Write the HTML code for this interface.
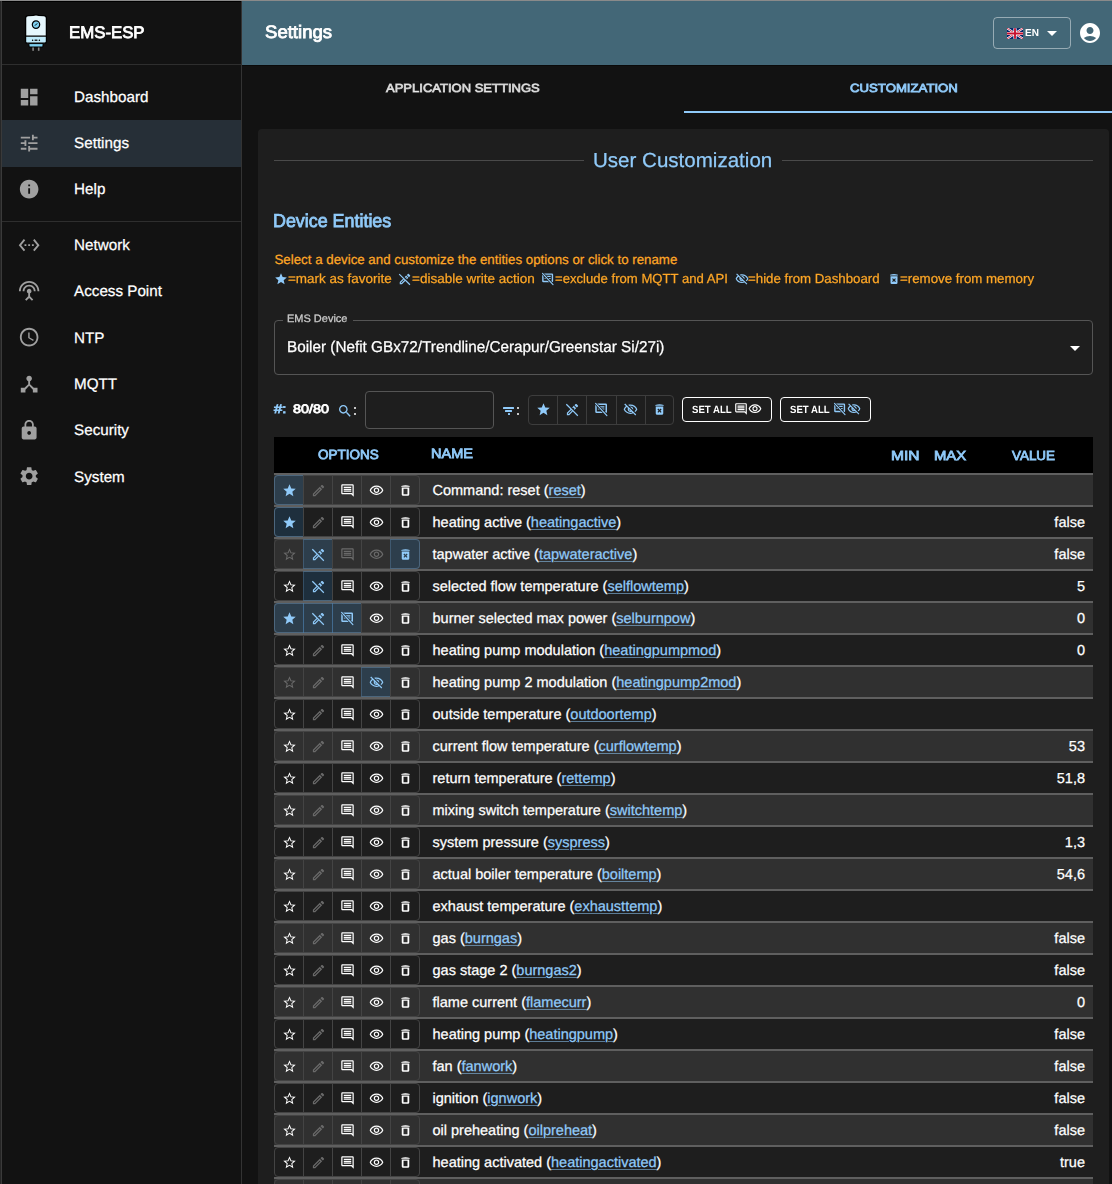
<!DOCTYPE html>
<html><head><meta charset="utf-8"><title>EMS-ESP</title>
<style>
*{box-sizing:border-box;margin:0;padding:0}
html,body{width:1112px;height:1184px;overflow:hidden;background:#121212;font-family:"Liberation Sans",sans-serif;text-rendering:geometricPrecision}
.a{position:absolute;white-space:nowrap}
</style></head><body>
<svg width="0" height="0" style="position:absolute"><defs><mask id="slashm" maskUnits="userSpaceOnUse" x="0" y="0" width="24" height="24"><rect x="0" y="0" width="24" height="24" fill="#fff"/><path d="M2.6 2.3 L20.6 21.7" stroke="#000" stroke-width="4.2"/></mask></defs></svg>
<div class="a" style="left:0px;top:0px;width:1112px;height:1184px;background:#121212;"></div>
<div class="a" style="left:0px;top:0px;width:2px;height:1184px;background:#262626;"></div>
<div class="a" style="left:1px;top:0px;width:1px;height:1184px;background:#3a3a3a;"></div>
<div class="a" style="left:241px;top:0px;width:1px;height:1184px;background:#333;"></div>
<div class="a" style="left:2px;top:64px;width:239px;height:1px;background:#2e2e2e;"></div>
<svg class="a" style="left:24px;top:14px" width="24" height="38" viewBox="0 0 24 38">
<path d="M1.6 4 Q1.6 2 4 1.7 L9 1.3 Q12 0.2 15 1.3 L20 1.7 Q22.4 2 22.4 4 L22.4 27.5 Q22.4 29.2 20.5 29.2 L3.5 29.2 Q1.6 29.2 1.6 27.5 Z" fill="#e6f7fd" stroke="#000" stroke-width="1.3"/>
<path d="M1.6 22.2 L22.4 22.2 L22.4 27.5 Q22.4 29.2 20.5 29.2 L3.5 29.2 Q1.6 29.2 1.6 27.5 Z" fill="#bfeafa" stroke="#000" stroke-width="1.2"/>
<circle cx="12" cy="10.6" r="3.7" fill="#7fd0f0" stroke="#000" stroke-width="1.2"/>
<path d="M11 11.6 L13.2 9.4" stroke="#000" stroke-width="1"/>
<circle cx="8.6" cy="26.2" r=".75" fill="#000"/><rect x="10.6" y="25.6" width="2.8" height="1.2" fill="#000"/><circle cx="15.4" cy="26.2" r=".75" fill="#000"/>
<path d="M4.8 29.6 L19.2 29.6 L18.8 33 L5.2 33 Z" fill="#7fd0f0" stroke="#000" stroke-width="1"/>
<rect x="8.3" y="33.5" width="1.6" height="3.3" fill="#888"/><rect x="13.9" y="33.5" width="1.6" height="3.3" fill="#888"/>
</svg>
<div class="a" style="left:69.16px;top:24.63px;font-size:16.744px;line-height:16.744px;color:#fff;font-weight:400;transform:scaleX(1.0031);transform-origin:0 0;-webkit-text-stroke-width:0.80px;">EMS-ESP</div>
<div class="a" style="left:2px;top:120px;width:239px;height:47px;background:#262f37;"></div>
<svg class="a" style="left:18px;top:86px;" width="22.3" height="22.3" viewBox="0 0 24 24"><path fill="#a0a0a0" d="M3 13h8V3H3v10zm0 8h8v-6H3v6zm10 0h8V11h-8v10zm0-18v6h8V3h-8z"/></svg>
<div class="a" style="left:74.1px;top:89.83px;font-size:15.2px;line-height:15.2px;color:#fff;font-weight:400;-webkit-text-stroke-width:0.25px;">Dashboard</div>
<svg class="a" style="left:18px;top:132px;" width="22.3" height="22.3" viewBox="0 0 24 24"><path fill="#a0a0a0" d="M3 17v2h6v-2H3zM3 5v2h10V5H3zm10 16v-2h8v-2h-8v-2h-2v6h2zM7 9v2H3v2h4v2h2V9H7zm14 4v-2H11v2h10zm-6-4h2V7h4V5h-4V3h-2v6z"/></svg>
<div class="a" style="left:74.1px;top:136.13px;font-size:15.2px;line-height:15.2px;color:#fff;font-weight:400;-webkit-text-stroke-width:0.25px;">Settings</div>
<svg class="a" style="left:18px;top:178px;" width="22.3" height="22.3" viewBox="0 0 24 24"><path fill="#a0a0a0" d="M12 2C6.48 2 2 6.48 2 12s4.48 10 10 10 10-4.48 10-10S17.52 2 12 2zm1 15h-2v-6h2v6zm0-8h-2V7h2v2z"/></svg>
<div class="a" style="left:74.1px;top:182.43px;font-size:15.2px;line-height:15.2px;color:#fff;font-weight:400;-webkit-text-stroke-width:0.25px;">Help</div>
<svg class="a" style="left:18px;top:234px;" width="22.3" height="22.3" viewBox="0 0 24 24"><path fill="#a0a0a0" d="M7.77 6.76 6.23 5.48.82 12l5.41 6.52 1.54-1.28L3.42 12l4.35-5.24zM7 13h2v-2H7v2zm10-2h-2v2h2v-2zm-6 2h2v-2h-2v2zm6.77-7.52-1.54 1.28L20.58 12l-4.35 5.24 1.54 1.28L23.18 12l-5.41-6.52z"/></svg>
<div class="a" style="left:74.1px;top:238.13px;font-size:15.2px;line-height:15.2px;color:#fff;font-weight:400;-webkit-text-stroke-width:0.25px;">Network</div>
<svg class="a" style="left:18px;top:280px;" width="22.3" height="22.3" viewBox="0 0 24 24"><path fill="#a0a0a0" d="M12 5c-3.87 0-7 3.13-7 7h2c0-2.76 2.24-5 5-5s5 2.24 5 5h2c0-3.87-3.13-7-7-7zm1 9.29c.88-.39 1.5-1.26 1.5-2.29 0-1.38-1.12-2.5-2.5-2.5S9.5 10.62 9.5 12c0 1.02.62 1.9 1.5 2.29v3.3L7.59 21 9 22.41l3-3 3 3L16.41 21 13 17.59v-3.3zM12 1C5.93 1 1 5.93 1 12h2c0-4.97 4.03-9 9-9s9 4.03 9 9h2c0-6.07-4.93-11-11-11z"/></svg>
<div class="a" style="left:74.1px;top:284.43px;font-size:15.2px;line-height:15.2px;color:#fff;font-weight:400;-webkit-text-stroke-width:0.25px;">Access Point</div>
<svg class="a" style="left:18px;top:326px;" width="22.3" height="22.3" viewBox="0 0 24 24"><path fill="#a0a0a0" d="M11.99 2C6.47 2 2 6.48 2 12s4.47 10 9.99 10C17.52 22 22 17.52 22 12S17.52 2 11.99 2zM12 20c-4.42 0-8-3.58-8-8s3.58-8 8-8 8 3.58 8 8-3.58 8-8 8zm.5-13H11v6l5.25 3.15.75-1.23-4.5-2.67z"/></svg>
<div class="a" style="left:74.1px;top:330.73px;font-size:15.2px;line-height:15.2px;color:#fff;font-weight:400;-webkit-text-stroke-width:0.25px;">NTP</div>
<svg class="a" style="left:18px;top:373px;" width="22.3" height="22.3" viewBox="0 0 24 24"><path fill="#a0a0a0" d="M17 16l-4-4V8.82C14.16 8.4 15 7.3 15 6c0-1.66-1.34-3-3-3S9 4.34 9 6c0 1.3.84 2.4 2 2.82V12l-4 4H3v5h5v-3.05l4-4.2 4 4.2V21h5v-5h-4z"/></svg>
<div class="a" style="left:74.1px;top:377.03px;font-size:15.2px;line-height:15.2px;color:#fff;font-weight:400;-webkit-text-stroke-width:0.25px;">MQTT</div>
<svg class="a" style="left:18px;top:419px;" width="22.3" height="22.3" viewBox="0 0 24 24"><path fill="#a0a0a0" d="M18 8h-1V6c0-2.76-2.24-5-5-5S7 3.24 7 6v2H6c-1.1 0-2 .9-2 2v10c0 1.1.9 2 2 2h12c1.1 0 2-.9 2-2V10c0-1.1-.9-2-2-2zm-6 9c-1.1 0-2-.9-2-2s.9-2 2-2 2 .9 2 2-.9 2-2 2zm3.1-9H8.9V6c0-1.71 1.39-3.1 3.1-3.1 1.71 0 3.1 1.39 3.1 3.1v2z"/></svg>
<div class="a" style="left:74.1px;top:423.33px;font-size:15.2px;line-height:15.2px;color:#fff;font-weight:400;-webkit-text-stroke-width:0.25px;">Security</div>
<svg class="a" style="left:18px;top:465px;" width="22.3" height="22.3" viewBox="0 0 24 24"><path fill="#a0a0a0" d="M19.14 12.94c.04-.3.06-.61.06-.94 0-.32-.02-.64-.07-.94l2.03-1.58c.18-.14.23-.41.12-.61l-1.92-3.32c-.12-.22-.37-.29-.59-.22l-2.39.96c-.5-.38-1.03-.7-1.62-.94l-.36-2.54c-.04-.24-.24-.41-.48-.41h-3.84c-.24 0-.43.17-.47.41l-.36 2.54c-.59.24-1.13.57-1.62.94l-2.39-.96c-.22-.08-.47 0-.59.22L2.74 8.87c-.12.21-.08.47.12.61l2.03 1.58c-.05.3-.09.63-.09.94s.02.64.07.94l-2.03 1.58c-.18.14-.23.41-.12.61l1.92 3.32c.12.22.37.29.59.22l2.39-.96c.5.38 1.03.7 1.62.94l.36 2.54c.05.24.24.41.48.41h3.84c.24 0 .44-.17.47-.41l.36-2.54c.59-.24 1.13-.56 1.62-.94l2.39.96c.22.08.47 0 .59-.22l1.92-3.32c.12-.22.07-.47-.12-.61l-2.01-1.58zM12 15.6c-1.98 0-3.6-1.62-3.6-3.6s1.62-3.6 3.6-3.6 3.6 1.62 3.6 3.6-1.62 3.6-3.6 3.6z"/></svg>
<div class="a" style="left:74.1px;top:469.63px;font-size:15.2px;line-height:15.2px;color:#fff;font-weight:400;-webkit-text-stroke-width:0.25px;">System</div>
<div class="a" style="left:2px;top:221px;width:239px;height:1px;background:#2e2e2e;"></div>
<div class="a" style="left:242px;top:0px;width:870px;height:65px;background:#436777;"></div>
<div class="a" style="left:0px;top:0px;width:1112px;height:1px;background:#8a8a8a;"></div>
<div class="a" style="left:2px;top:1px;width:239px;height:1px;background:#000;"></div>
<div class="a" style="left:242px;top:65px;width:870px;height:1px;background:#0a0a0a;"></div>
<div class="a" style="left:265.46px;top:23.32px;font-size:18.052px;line-height:18.052px;color:#fff;font-weight:400;transform:scaleX(1.0287);transform-origin:0 0;-webkit-text-stroke-width:0.80px;">Settings</div>
<div class="a" style="left:993px;top:17px;width:78px;height:32px;background:transparent;border:1px solid rgba(255,255,255,0.45);border-radius:4px;"></div>
<svg class="a" style="left:1007px;top:28px" width="16" height="11" viewBox="0 0 60 40">
<rect width="60" height="40" fill="#012169"/>
<path d="M0 0L60 40M60 0L0 40" stroke="#fff" stroke-width="8"/>
<path d="M0 0L60 40M60 0L0 40" stroke="#C8102E" stroke-width="3"/>
<path d="M30 0V40M0 20H60" stroke="#fff" stroke-width="12"/>
<path d="M30 0V40M0 20H60" stroke="#C8102E" stroke-width="7"/>
</svg>
<div class="a" style="left:1025.45px;top:29.49px;font-size:10.174px;line-height:10.174px;color:#fff;font-weight:700;transform:scaleX(0.9848);transform-origin:0 0;-webkit-text-stroke-width:0.00px;">EN</div>
<svg class="a" style="left:1040.3px;top:20.5px;" width="24" height="24" viewBox="0 0 24 24"><path fill="#fff" d="M7 10l5 5 5-5z"/></svg>
<svg class="a" style="left:1078px;top:21px;" width="24" height="24" viewBox="0 0 24 24"><path fill="#fff" d="M12 2C6.48 2 2 6.48 2 12s4.48 10 10 10 10-4.48 10-10S17.52 2 12 2zm0 4c1.93 0 3.5 1.57 3.5 3.5S13.93 13 12 13s-3.5-1.57-3.5-3.5S10.07 6 12 6zm0 14c-2.03 0-4.43-.82-6.14-2.88C7.55 15.8 9.68 15 12 15s4.45.8 6.14 2.12C16.43 19.18 14.03 20 12 20z"/></svg>
<div class="a" style="left:385.90px;top:82.86px;font-size:11.802px;line-height:11.802px;color:rgba(255,255,255,0.7);font-weight:400;transform:scaleX(1.1026);transform-origin:0 0;-webkit-text-stroke-width:0.80px;">APPLICATION SETTINGS</div>
<div class="a" style="left:850.14px;top:82.86px;font-size:11.802px;line-height:11.802px;color:#90caf9;font-weight:400;transform:scaleX(1.1171);transform-origin:0 0;-webkit-text-stroke-width:0.80px;">CUSTOMIZATION</div>
<div class="a" style="left:684px;top:111px;width:428px;height:2px;background:#90caf9;"></div>
<div class="a" style="left:258px;top:129px;width:851px;height:1100px;background:#1e1e1e;border-radius:4px;"></div>
<div class="a" style="left:274px;top:160px;width:310px;height:1px;background:#4a4a4a;"></div>
<div class="a" style="left:782px;top:160px;width:311px;height:1px;background:#4a4a4a;"></div>
<div class="a" style="left:593.46px;top:150.87px;font-size:20.349px;line-height:20.349px;color:#90caf9;font-weight:400;transform:scaleX(1.0106);transform-origin:0 0;-webkit-text-stroke-width:0.25px;">User Customization</div>
<div class="a" style="left:273.27px;top:212.10px;font-size:18.779px;line-height:18.779px;color:#90caf9;font-weight:400;transform:scaleX(0.9528);transform-origin:0 0;-webkit-text-stroke-width:0.80px;">Device Entities</div>
<div class="a" style="left:274.5px;top:252.64px;font-size:13.3px;line-height:13.3px;color:#ffa726;font-weight:400;-webkit-text-stroke-width:0.25px;">Select a device and customize the entities options or click to rename</div>
<svg class="a" style="left:274.2px;top:271.6px;" width="14" height="14" viewBox="0 0 24 24"><path fill="#90caf9" d="M12 17.27L18.18 21l-1.64-7.03L22 9.24l-7.19-.61L12 2 9.19 8.63 2 9.24l5.46 4.73L5.82 21z"/></svg>
<div class="a" style="left:287.66px;top:271.60px;font-size:13.227px;line-height:13.227px;color:#ffa726;font-weight:400;transform:scaleX(1.0187);transform-origin:0 0;-webkit-text-stroke-width:0.25px;">=mark as favorite</div>
<svg class="a" style="left:397.7px;top:271.6px;" width="14" height="14" viewBox="0 0 24 24"><path fill="#90caf9" d="M14.06 9.02l.92.92-1.11 1.11 1.41 1.41 2.52-2.52-3.75-3.75-2.52 2.52 1.41 1.41 1.12-1.1zm6.65-1.98c.39-.39.39-1.02 0-1.41l-2.34-2.34c-.2-.2-.45-.29-.7-.29s-.51.1-.7.29l-1.83 1.83 3.75 3.75 1.82-1.83zM2.81 2.81 1.39 4.22l7.32 7.32L3 17.25V21h3.75l5.71-5.71 7.32 7.32 1.41-1.41L2.81 2.81zM5.92 19H5v-.92l5.13-5.13.92.92L5.92 19z"/></svg>
<div class="a" style="left:411.76px;top:271.60px;font-size:13.227px;line-height:13.227px;color:#ffa726;font-weight:400;transform:scaleX(1.0224);transform-origin:0 0;-webkit-text-stroke-width:0.25px;">=disable write action</div>
<svg class="a" style="left:540.8px;top:271.6px;" width="14" height="14" viewBox="0 0 24 24"><g mask="url(#slashm)"><path fill="#90caf9" fill-rule="evenodd" d="M4 2.4h14.8a2 2 0 0 1 2 2v11.2a2 2 0 0 1-2 2H4a2 2 0 0 1-2-2V4.4a2 2 0 0 1 2-2z M4.4 4.8v10.4h14V4.8z"/><path fill="#90caf9" d="M6.2 6.6h10.4v2H6.2z M6.2 10.2h10.4v1.8H6.2z"/></g><path d="M2.6 2.3 L20.6 21.7" stroke="#90caf9" stroke-width="1.9" stroke-linecap="round"/></svg>
<div class="a" style="left:554.88px;top:271.60px;font-size:13.227px;line-height:13.227px;color:#ffa726;font-weight:400;transform:scaleX(0.9922);transform-origin:0 0;-webkit-text-stroke-width:0.25px;">=exclude from MQTT and API</div>
<svg class="a" style="left:734.9px;top:271.6px;" width="14" height="14" viewBox="0 0 24 24"><path fill="#90caf9" d="M12 6c3.79 0 7.17 2.13 8.82 5.5-.59 1.22-1.42 2.27-2.41 3.12l1.41 1.41c1.39-1.23 2.49-2.77 3.18-4.53C21.27 7.11 17 4 12 4c-1.27 0-2.49.2-3.64.57l1.65 1.65C10.66 6.09 11.32 6 12 6zm-1.07 1.14L13 9.21c.57.25 1.03.71 1.28 1.28l2.07 2.07c.08-.34.14-.7.14-1.07C16.5 9.01 14.48 7 12 7c-.37 0-.72.05-1.07.14zM2.01 3.87l2.68 2.68C3.06 7.83 1.77 9.53 1 11.5 2.73 15.89 7 19 12 19c1.52 0 2.98-.29 4.32-.82l3.42 3.42 1.41-1.41L3.42 2.45 2.01 3.87zm7.5 7.5 2.61 2.61c-.04.01-.08.02-.12.02-1.38 0-2.5-1.12-2.5-2.5 0-.05.01-.08.01-.13zm-3.4-3.4 1.75 1.75c-.23.55-.36 1.15-.36 1.78 0 2.48 2.02 4.5 4.5 4.5.63 0 1.23-.13 1.77-.36l.98.98c-.88.24-1.8.38-2.75.38-3.79 0-7.17-2.13-8.82-5.5.7-1.43 1.72-2.61 2.93-3.53z"/></svg>
<div class="a" style="left:747.97px;top:271.60px;font-size:13.227px;line-height:13.227px;color:#ffa726;font-weight:400;transform:scaleX(1.0039);transform-origin:0 0;-webkit-text-stroke-width:0.25px;">=hide from Dashboard</div>
<svg class="a" style="left:887.3px;top:271.6px;" width="14" height="14" viewBox="0 0 24 24"><path fill="#90caf9" fill-rule="evenodd" d="M5.3 4.6 Q12 2.6 18.7 4.6 L18.7 6.1 L5.3 6.1 Z M6 7.2h12v11.1a2.2 2.2 0 0 1-2.2 2.2H8.2A2.2 2.2 0 0 1 6 18.3Z M13.91 10.58 L15.32 11.99 L13.41 13.90 L15.32 15.81 L13.91 17.22 L12.00 15.31 L10.09 17.22 L8.68 15.81 L10.59 13.90 L8.68 11.99 L10.09 10.58 L12.00 12.49Z"/></svg>
<div class="a" style="left:900.17px;top:271.60px;font-size:13.227px;line-height:13.227px;color:#ffa726;font-weight:400;transform:scaleX(1.0055);transform-origin:0 0;-webkit-text-stroke-width:0.25px;">=remove from memory</div>
<div class="a" style="left:274px;top:320px;width:819px;height:55px;background:transparent;border:1px solid #555;border-radius:4px;"></div>
<div class="a" style="left:283px;top:316px;width:70px;height:6px;background:#1e1e1e;"></div>
<div class="a" style="left:287.32px;top:314.00px;font-size:10.756px;line-height:10.756px;color:rgba(255,255,255,0.7);font-weight:400;transform:scaleX(1.0218);transform-origin:0 0;-webkit-text-stroke-width:0.25px;">EMS Device</div>
<div class="a" style="left:287.38px;top:340.01px;font-size:15.698px;line-height:15.698px;color:#fff;font-weight:400;transform:scaleX(0.9742);transform-origin:0 0;-webkit-text-stroke-width:0.25px;">Boiler (Nefit GBx72/Trendline/Cerapur/Greenstar Si/27i)</div>
<svg class="a" style="left:1063px;top:335.5px;" width="24" height="24" viewBox="0 0 24 24"><path fill="#fff" d="M7 10l5 5 5-5z"/></svg>
<div class="a" style="left:273.96px;top:402.62px;font-size:12.384px;line-height:12.384px;color:#90caf9;font-weight:400;transform:scaleX(1.2004);transform-origin:0 0;-webkit-text-stroke-width:0.80px;">#:</div>
<div class="a" style="left:292.89px;top:402.62px;font-size:12.384px;line-height:12.384px;color:#fff;font-weight:400;transform:scaleX(1.1600);transform-origin:0 0;-webkit-text-stroke-width:0.80px;">80/80</div>
<svg class="a" style="left:337px;top:403px;" width="16" height="16" viewBox="0 0 24 24"><path fill="#90caf9" d="M15.5 14h-.79l-.28-.27C15.41 12.59 16 11.11 16 9.5 16 5.91 13.09 3 9.5 3S3 5.91 3 9.5 5.91 16 9.5 16c1.61 0 3.09-.59 4.23-1.57l.27.28v.79l5 4.99L20.49 19l-4.99-5zm-6 0C7.01 14 5 11.99 5 9.5S7.01 5 9.5 5 14 7.01 14 9.5 11.99 14 9.5 14z"/></svg>
<div class="a" style="left:353.5px;top:406.9px;width:2.4px;height:2.4px;background:#fff;border-radius:1px"></div>
<div class="a" style="left:353.5px;top:412.7px;width:2.4px;height:2.4px;background:#fff;border-radius:1px"></div>
<div class="a" style="left:365px;top:391px;width:129px;height:38px;background:transparent;border:1px solid #555;border-radius:4px;"></div>
<div class="a" style="left:503.4px;top:407px;width:10.8px;height:2px;background:#90caf9;border-radius:0.5px"></div>
<div class="a" style="left:505.2px;top:410.2px;width:7.2px;height:2px;background:#90caf9;border-radius:0.5px"></div>
<div class="a" style="left:507.6px;top:413.2px;width:2.6px;height:1.8px;background:#90caf9;border-radius:0.5px"></div>
<div class="a" style="left:517.1px;top:406.7px;width:2.4px;height:2.4px;background:#fff;border-radius:1px"></div>
<div class="a" style="left:517.1px;top:412.8px;width:2.4px;height:2.4px;background:#fff;border-radius:1px"></div>
<div class="a" style="left:528px;top:395px;width:146px;height:30px;background:transparent;border:1px solid #3d3d3d;border-radius:4px;"></div>
<svg class="a" style="left:535.5px;top:402px;" width="15" height="15" viewBox="0 0 24 24"><path fill="#90caf9" d="M12 17.27L18.18 21l-1.64-7.03L22 9.24l-7.19-.61L12 2 9.19 8.63 2 9.24l5.46 4.73L5.82 21z"/></svg>
<div class="a" style="left:557px;top:395px;width:1px;height:30px;background:#3d3d3d;"></div>
<svg class="a" style="left:564.7px;top:402px;" width="15" height="15" viewBox="0 0 24 24"><path fill="#90caf9" d="M14.06 9.02l.92.92-1.11 1.11 1.41 1.41 2.52-2.52-3.75-3.75-2.52 2.52 1.41 1.41 1.12-1.1zm6.65-1.98c.39-.39.39-1.02 0-1.41l-2.34-2.34c-.2-.2-.45-.29-.7-.29s-.51.1-.7.29l-1.83 1.83 3.75 3.75 1.82-1.83zM2.81 2.81 1.39 4.22l7.32 7.32L3 17.25V21h3.75l5.71-5.71 7.32 7.32 1.41-1.41L2.81 2.81zM5.92 19H5v-.92l5.13-5.13.92.92L5.92 19z"/></svg>
<div class="a" style="left:586px;top:395px;width:1px;height:30px;background:#3d3d3d;"></div>
<svg class="a" style="left:593.9px;top:402px;" width="15" height="15" viewBox="0 0 24 24"><g mask="url(#slashm)"><path fill="#90caf9" fill-rule="evenodd" d="M4 2.4h14.8a2 2 0 0 1 2 2v11.2a2 2 0 0 1-2 2H4a2 2 0 0 1-2-2V4.4a2 2 0 0 1 2-2z M4.4 4.8v10.4h14V4.8z"/><path fill="#90caf9" d="M6.2 6.6h10.4v2H6.2z M6.2 10.2h10.4v1.8H6.2z"/></g><path d="M2.6 2.3 L20.6 21.7" stroke="#90caf9" stroke-width="1.9" stroke-linecap="round"/></svg>
<div class="a" style="left:616px;top:395px;width:1px;height:30px;background:#3d3d3d;"></div>
<svg class="a" style="left:623.1px;top:402px;" width="15" height="15" viewBox="0 0 24 24"><path fill="#90caf9" d="M12 6c3.79 0 7.17 2.13 8.82 5.5-.59 1.22-1.42 2.27-2.41 3.12l1.41 1.41c1.39-1.23 2.49-2.77 3.18-4.53C21.27 7.11 17 4 12 4c-1.27 0-2.49.2-3.64.57l1.65 1.65C10.66 6.09 11.32 6 12 6zm-1.07 1.14L13 9.21c.57.25 1.03.71 1.28 1.28l2.07 2.07c.08-.34.14-.7.14-1.07C16.5 9.01 14.48 7 12 7c-.37 0-.72.05-1.07.14zM2.01 3.87l2.68 2.68C3.06 7.83 1.77 9.53 1 11.5 2.73 15.89 7 19 12 19c1.52 0 2.98-.29 4.32-.82l3.42 3.42 1.41-1.41L3.42 2.45 2.01 3.87zm7.5 7.5 2.61 2.61c-.04.01-.08.02-.12.02-1.38 0-2.5-1.12-2.5-2.5 0-.05.01-.08.01-.13zm-3.4-3.4 1.75 1.75c-.23.55-.36 1.15-.36 1.78 0 2.48 2.02 4.5 4.5 4.5.63 0 1.23-.13 1.77-.36l.98.98c-.88.24-1.8.38-2.75.38-3.79 0-7.17-2.13-8.82-5.5.7-1.43 1.72-2.61 2.93-3.53z"/></svg>
<div class="a" style="left:645px;top:395px;width:1px;height:30px;background:#3d3d3d;"></div>
<svg class="a" style="left:652.3px;top:402px;" width="15" height="15" viewBox="0 0 24 24"><path fill="#90caf9" fill-rule="evenodd" d="M5.3 4.6 Q12 2.6 18.7 4.6 L18.7 6.1 L5.3 6.1 Z M6 7.2h12v11.1a2.2 2.2 0 0 1-2.2 2.2H8.2A2.2 2.2 0 0 1 6 18.3Z M13.91 10.58 L15.32 11.99 L13.41 13.90 L15.32 15.81 L13.91 17.22 L12.00 15.31 L10.09 17.22 L8.68 15.81 L10.59 13.90 L8.68 11.99 L10.09 10.58 L12.00 12.49Z"/></svg>
<div class="a" style="left:682px;top:397px;width:90px;height:25px;background:transparent;border:1px solid #fff;border-radius:4px;"></div>
<div class="a" style="left:691.74px;top:406.34px;font-size:10.465px;line-height:10.465px;color:#fff;font-weight:700;transform:scaleX(0.9198);transform-origin:0 0;-webkit-text-stroke-width:0.00px;">SET ALL</div>
<svg class="a" style="left:734px;top:402px;" width="14" height="14" viewBox="0 0 24 24"><path fill="#fff" d="M21.99 4c0-1.1-.89-2-1.99-2H4c-1.1 0-2 .9-2 2v12c0 1.1.9 2 2 2h14l4 4-.01-18zM20 4v13.17L18.83 16H4V4h16zM6 12h12v2H6zm0-3h12v2H6zm0-3h12v2H6z"/></svg>
<svg class="a" style="left:748px;top:402px;" width="14" height="14" viewBox="0 0 24 24"><path fill="#fff" d="M12 6c3.79 0 7.17 2.13 8.82 5.5C19.17 14.87 15.79 17 12 17s-7.17-2.13-8.82-5.5C4.83 8.13 8.21 6 12 6m0-2C7 4 2.73 7.11 1 11.5 2.73 15.89 7 19 12 19s9.27-3.11 11-7.5C21.27 7.11 17 4 12 4zm0 5c1.38 0 2.5 1.12 2.5 2.5S13.38 14 12 14s-2.5-1.12-2.5-2.5S10.62 9 12 9m0-2c-2.48 0-4.5 2.02-4.5 4.5S9.52 16 12 16s4.5-2.02 4.5-4.5S14.48 7 12 7z"/></svg>
<div class="a" style="left:780px;top:397px;width:91px;height:25px;background:transparent;border:1px solid #fff;border-radius:4px;"></div>
<div class="a" style="left:789.94px;top:406.34px;font-size:10.465px;line-height:10.465px;color:#fff;font-weight:700;transform:scaleX(0.9198);transform-origin:0 0;-webkit-text-stroke-width:0.00px;">SET ALL</div>
<svg class="a" style="left:833px;top:402px;" width="14" height="14" viewBox="0 0 24 24"><g mask="url(#slashm)"><path fill="#90caf9" fill-rule="evenodd" d="M4 2.4h14.8a2 2 0 0 1 2 2v11.2a2 2 0 0 1-2 2H4a2 2 0 0 1-2-2V4.4a2 2 0 0 1 2-2z M4.4 4.8v10.4h14V4.8z"/><path fill="#90caf9" d="M6.2 6.6h10.4v2H6.2z M6.2 10.2h10.4v1.8H6.2z"/></g><path d="M2.6 2.3 L20.6 21.7" stroke="#90caf9" stroke-width="1.9" stroke-linecap="round"/></svg>
<svg class="a" style="left:847px;top:402px;" width="14" height="14" viewBox="0 0 24 24"><path fill="#90caf9" d="M12 6c3.79 0 7.17 2.13 8.82 5.5-.59 1.22-1.42 2.27-2.41 3.12l1.41 1.41c1.39-1.23 2.49-2.77 3.18-4.53C21.27 7.11 17 4 12 4c-1.27 0-2.49.2-3.64.57l1.65 1.65C10.66 6.09 11.32 6 12 6zm-1.07 1.14L13 9.21c.57.25 1.03.71 1.28 1.28l2.07 2.07c.08-.34.14-.7.14-1.07C16.5 9.01 14.48 7 12 7c-.37 0-.72.05-1.07.14zM2.01 3.87l2.68 2.68C3.06 7.83 1.77 9.53 1 11.5 2.73 15.89 7 19 12 19c1.52 0 2.98-.29 4.32-.82l3.42 3.42 1.41-1.41L3.42 2.45 2.01 3.87zm7.5 7.5 2.61 2.61c-.04.01-.08.02-.12.02-1.38 0-2.5-1.12-2.5-2.5 0-.05.01-.08.01-.13zm-3.4-3.4 1.75 1.75c-.23.55-.36 1.15-.36 1.78 0 2.48 2.02 4.5 4.5 4.5.63 0 1.23-.13 1.77-.36l.98.98c-.88.24-1.8.38-2.75.38-3.79 0-7.17-2.13-8.82-5.5.7-1.43 1.72-2.61 2.93-3.53z"/></svg>
<div class="a" style="left:274px;top:437px;width:819px;height:36px;background:#000;"></div>
<div class="a" style="left:318.39px;top:448.36px;font-size:13.401px;line-height:13.401px;color:#90caf9;font-weight:400;transform:scaleX(1.0085);transform-origin:0 0;-webkit-text-stroke-width:0.80px;">OPTIONS</div>
<div class="a" style="left:431.14px;top:447.23px;font-size:13.547px;line-height:13.547px;color:#90caf9;font-weight:400;transform:scaleX(1.0750);transform-origin:0 0;-webkit-text-stroke-width:0.80px;">NAME</div>
<div class="a" style="left:891.25px;top:448.58px;font-size:13.256px;line-height:13.256px;color:#90caf9;font-weight:400;transform:scaleX(1.1772);transform-origin:0 0;-webkit-text-stroke-width:0.80px;">MIN</div>
<div class="a" style="left:933.81px;top:448.58px;font-size:13.256px;line-height:13.256px;color:#90caf9;font-weight:400;transform:scaleX(1.1202);transform-origin:0 0;-webkit-text-stroke-width:0.80px;">MAX</div>
<div class="a" style="left:1011.57px;top:448.58px;font-size:13.256px;line-height:13.256px;color:#90caf9;font-weight:400;transform:scaleX(1.0122);transform-origin:0 0;-webkit-text-stroke-width:0.80px;">VALUE</div>
<div class="a" style="left:274px;top:475px;width:819px;height:30px;background:#303030;"></div>
<div class="a" style="left:274px;top:473px;width:819px;height:2px;background:#5f5f5f;"></div>
<div class="a" style="left:274px;top:505px;width:819px;height:2px;background:#5f5f5f;"></div>
<div class="a" style="left:274px;top:475px;width:146px;height:30px;background:transparent;border:1px solid #444;border-radius:4px;"></div>
<div class="a" style="left:274px;top:475px;width:30px;height:30px;background:rgba(33,150,243,0.15);border:1px solid rgba(120,170,220,0.25);border-radius:4px 0 0 4px;"></div>
<svg class="a" style="left:281.5px;top:482.5px;" width="15" height="15" viewBox="0 0 24 24"><path fill="#90caf9" d="M12 17.27L18.18 21l-1.64-7.03L22 9.24l-7.19-.61L12 2 9.19 8.63 2 9.24l5.46 4.73L5.82 21z"/></svg>
<div class="a" style="left:303px;top:475px;width:1px;height:30px;background:#444;"></div>
<svg class="a" style="left:310.5px;top:482.5px;" width="15" height="15" viewBox="0 0 24 24"><path fill="#6a6a6a" d="M14.06 9.02l.92.92L5.92 19H5v-.92l9.06-9.06M17.66 3c-.25 0-.51.1-.7.29l-1.83 1.83 3.75 3.75 1.83-1.83c.39-.39.39-1.02 0-1.41l-2.34-2.34c-.2-.2-.45-.29-.71-.29zm-3.6 3.19L3 17.25V21h3.75L17.81 9.94l-3.75-3.75z"/></svg>
<div class="a" style="left:332px;top:475px;width:1px;height:30px;background:#444;"></div>
<svg class="a" style="left:339.5px;top:482.5px;" width="15" height="15" viewBox="0 0 24 24"><path fill="#fff" d="M21.99 4c0-1.1-.89-2-1.99-2H4c-1.1 0-2 .9-2 2v12c0 1.1.9 2 2 2h14l4 4-.01-18zM20 4v13.17L18.83 16H4V4h16zM6 12h12v2H6zm0-3h12v2H6zm0-3h12v2H6z"/></svg>
<div class="a" style="left:361px;top:475px;width:1px;height:30px;background:#444;"></div>
<svg class="a" style="left:368.5px;top:482.5px;" width="15" height="15" viewBox="0 0 24 24"><path fill="#fff" d="M12 6c3.79 0 7.17 2.13 8.82 5.5C19.17 14.87 15.79 17 12 17s-7.17-2.13-8.82-5.5C4.83 8.13 8.21 6 12 6m0-2C7 4 2.73 7.11 1 11.5 2.73 15.89 7 19 12 19s9.27-3.11 11-7.5C21.27 7.11 17 4 12 4zm0 5c1.38 0 2.5 1.12 2.5 2.5S13.38 14 12 14s-2.5-1.12-2.5-2.5S10.62 9 12 9m0-2c-2.48 0-4.5 2.02-4.5 4.5S9.52 16 12 16s4.5-2.02 4.5-4.5S14.48 7 12 7z"/></svg>
<div class="a" style="left:390px;top:475px;width:1px;height:30px;background:#444;"></div>
<svg class="a" style="left:397.5px;top:482.5px;" width="15" height="15" viewBox="0 0 24 24"><path fill="#fff" fill-rule="evenodd" d="M5.3 4.6 Q12 2.6 18.7 4.6 L18.7 6.1 L5.3 6.1 Z M6 7.2h12v11.1a2.2 2.2 0 0 1-2.2 2.2H8.2A2.2 2.2 0 0 1 6 18.3Z M8.8 9.1v8.9h6.4V9.1Z"/></svg>
<div class="a" style="left:432.5px;top:483.63px;font-size:14.5px;line-height:14.5px;color:#fff;font-weight:400;-webkit-text-stroke-width:0.25px;">Command: reset (<span style="color:#90caf9;text-decoration:underline;text-decoration-color:rgba(144,202,249,0.55);text-underline-offset:1.5px;text-decoration-thickness:1px">reset</span>)</div>
<div class="a" style="left:274px;top:507px;width:819px;height:30px;background:#1e1e1e;"></div>
<div class="a" style="left:274px;top:505px;width:819px;height:2px;background:#5f5f5f;"></div>
<div class="a" style="left:274px;top:537px;width:819px;height:2px;background:#5f5f5f;"></div>
<div class="a" style="left:274px;top:507px;width:146px;height:30px;background:transparent;border:1px solid #444;border-radius:4px;"></div>
<div class="a" style="left:274px;top:507px;width:30px;height:30px;background:rgba(33,150,243,0.15);border:1px solid rgba(120,170,220,0.25);border-radius:4px 0 0 4px;"></div>
<svg class="a" style="left:281.5px;top:514.5px;" width="15" height="15" viewBox="0 0 24 24"><path fill="#90caf9" d="M12 17.27L18.18 21l-1.64-7.03L22 9.24l-7.19-.61L12 2 9.19 8.63 2 9.24l5.46 4.73L5.82 21z"/></svg>
<div class="a" style="left:303px;top:507px;width:1px;height:30px;background:#444;"></div>
<svg class="a" style="left:310.5px;top:514.5px;" width="15" height="15" viewBox="0 0 24 24"><path fill="#6a6a6a" d="M14.06 9.02l.92.92L5.92 19H5v-.92l9.06-9.06M17.66 3c-.25 0-.51.1-.7.29l-1.83 1.83 3.75 3.75 1.83-1.83c.39-.39.39-1.02 0-1.41l-2.34-2.34c-.2-.2-.45-.29-.71-.29zm-3.6 3.19L3 17.25V21h3.75L17.81 9.94l-3.75-3.75z"/></svg>
<div class="a" style="left:332px;top:507px;width:1px;height:30px;background:#444;"></div>
<svg class="a" style="left:339.5px;top:514.5px;" width="15" height="15" viewBox="0 0 24 24"><path fill="#fff" d="M21.99 4c0-1.1-.89-2-1.99-2H4c-1.1 0-2 .9-2 2v12c0 1.1.9 2 2 2h14l4 4-.01-18zM20 4v13.17L18.83 16H4V4h16zM6 12h12v2H6zm0-3h12v2H6zm0-3h12v2H6z"/></svg>
<div class="a" style="left:361px;top:507px;width:1px;height:30px;background:#444;"></div>
<svg class="a" style="left:368.5px;top:514.5px;" width="15" height="15" viewBox="0 0 24 24"><path fill="#fff" d="M12 6c3.79 0 7.17 2.13 8.82 5.5C19.17 14.87 15.79 17 12 17s-7.17-2.13-8.82-5.5C4.83 8.13 8.21 6 12 6m0-2C7 4 2.73 7.11 1 11.5 2.73 15.89 7 19 12 19s9.27-3.11 11-7.5C21.27 7.11 17 4 12 4zm0 5c1.38 0 2.5 1.12 2.5 2.5S13.38 14 12 14s-2.5-1.12-2.5-2.5S10.62 9 12 9m0-2c-2.48 0-4.5 2.02-4.5 4.5S9.52 16 12 16s4.5-2.02 4.5-4.5S14.48 7 12 7z"/></svg>
<div class="a" style="left:390px;top:507px;width:1px;height:30px;background:#444;"></div>
<svg class="a" style="left:397.5px;top:514.5px;" width="15" height="15" viewBox="0 0 24 24"><path fill="#fff" fill-rule="evenodd" d="M5.3 4.6 Q12 2.6 18.7 4.6 L18.7 6.1 L5.3 6.1 Z M6 7.2h12v11.1a2.2 2.2 0 0 1-2.2 2.2H8.2A2.2 2.2 0 0 1 6 18.3Z M8.8 9.1v8.9h6.4V9.1Z"/></svg>
<div class="a" style="left:432.5px;top:515.63px;font-size:14.5px;line-height:14.5px;color:#fff;font-weight:400;-webkit-text-stroke-width:0.25px;">heating active (<span style="color:#90caf9;text-decoration:underline;text-decoration-color:rgba(144,202,249,0.55);text-underline-offset:1.5px;text-decoration-thickness:1px">heatingactive</span>)</div>
<div class="a" style="right:27px;top:515.63px;font-size:14.5px;line-height:14.5px;color:#fff;font-weight:400;text-align:right;-webkit-text-stroke-width:0.25px;">false</div>
<div class="a" style="left:274px;top:539px;width:819px;height:30px;background:#303030;"></div>
<div class="a" style="left:274px;top:537px;width:819px;height:2px;background:#5f5f5f;"></div>
<div class="a" style="left:274px;top:569px;width:819px;height:2px;background:#5f5f5f;"></div>
<div class="a" style="left:274px;top:539px;width:146px;height:30px;background:transparent;border:1px solid #444;border-radius:4px;"></div>
<svg class="a" style="left:281.5px;top:546.5px;" width="15" height="15" viewBox="0 0 24 24"><path fill="#6a6a6a" d="M22 9.24l-7.19-.62L12 2 9.19 8.63 2 9.24l5.46 4.73L5.82 21 12 17.27 18.18 21l-1.63-7.03L22 9.24zM12 15.4l-3.76 2.27 1-4.28-3.32-2.88 4.38-.38L12 6.1l1.71 4.04 4.38.38-3.32 2.88 1 4.28L12 15.4z"/></svg>
<div class="a" style="left:303px;top:539px;width:30px;height:30px;background:rgba(33,150,243,0.15);border:1px solid rgba(120,170,220,0.25);"></div>
<svg class="a" style="left:310.5px;top:546.5px;" width="15" height="15" viewBox="0 0 24 24"><path fill="#90caf9" d="M14.06 9.02l.92.92-1.11 1.11 1.41 1.41 2.52-2.52-3.75-3.75-2.52 2.52 1.41 1.41 1.12-1.1zm6.65-1.98c.39-.39.39-1.02 0-1.41l-2.34-2.34c-.2-.2-.45-.29-.7-.29s-.51.1-.7.29l-1.83 1.83 3.75 3.75 1.82-1.83zM2.81 2.81 1.39 4.22l7.32 7.32L3 17.25V21h3.75l5.71-5.71 7.32 7.32 1.41-1.41L2.81 2.81zM5.92 19H5v-.92l5.13-5.13.92.92L5.92 19z"/></svg>
<div class="a" style="left:332px;top:539px;width:1px;height:30px;background:#444;"></div>
<svg class="a" style="left:339.5px;top:546.5px;" width="15" height="15" viewBox="0 0 24 24"><path fill="#6a6a6a" d="M21.99 4c0-1.1-.89-2-1.99-2H4c-1.1 0-2 .9-2 2v12c0 1.1.9 2 2 2h14l4 4-.01-18zM20 4v13.17L18.83 16H4V4h16zM6 12h12v2H6zm0-3h12v2H6zm0-3h12v2H6z"/></svg>
<div class="a" style="left:361px;top:539px;width:1px;height:30px;background:#444;"></div>
<svg class="a" style="left:368.5px;top:546.5px;" width="15" height="15" viewBox="0 0 24 24"><path fill="#6a6a6a" d="M12 6c3.79 0 7.17 2.13 8.82 5.5C19.17 14.87 15.79 17 12 17s-7.17-2.13-8.82-5.5C4.83 8.13 8.21 6 12 6m0-2C7 4 2.73 7.11 1 11.5 2.73 15.89 7 19 12 19s9.27-3.11 11-7.5C21.27 7.11 17 4 12 4zm0 5c1.38 0 2.5 1.12 2.5 2.5S13.38 14 12 14s-2.5-1.12-2.5-2.5S10.62 9 12 9m0-2c-2.48 0-4.5 2.02-4.5 4.5S9.52 16 12 16s4.5-2.02 4.5-4.5S14.48 7 12 7z"/></svg>
<div class="a" style="left:390px;top:539px;width:30px;height:30px;background:rgba(33,150,243,0.15);border:1px solid rgba(120,170,220,0.25);border-radius:0 4px 4px 0;"></div>
<svg class="a" style="left:397.5px;top:546.5px;" width="15" height="15" viewBox="0 0 24 24"><path fill="#90caf9" fill-rule="evenodd" d="M5.3 4.6 Q12 2.6 18.7 4.6 L18.7 6.1 L5.3 6.1 Z M6 7.2h12v11.1a2.2 2.2 0 0 1-2.2 2.2H8.2A2.2 2.2 0 0 1 6 18.3Z M13.91 10.58 L15.32 11.99 L13.41 13.90 L15.32 15.81 L13.91 17.22 L12.00 15.31 L10.09 17.22 L8.68 15.81 L10.59 13.90 L8.68 11.99 L10.09 10.58 L12.00 12.49Z"/></svg>
<div class="a" style="left:432.5px;top:547.63px;font-size:14.5px;line-height:14.5px;color:#fff;font-weight:400;-webkit-text-stroke-width:0.25px;">tapwater active (<span style="color:#90caf9;text-decoration:underline;text-decoration-color:rgba(144,202,249,0.55);text-underline-offset:1.5px;text-decoration-thickness:1px">tapwateractive</span>)</div>
<div class="a" style="right:27px;top:547.63px;font-size:14.5px;line-height:14.5px;color:#fff;font-weight:400;text-align:right;-webkit-text-stroke-width:0.25px;">false</div>
<div class="a" style="left:274px;top:571px;width:819px;height:30px;background:#1e1e1e;"></div>
<div class="a" style="left:274px;top:569px;width:819px;height:2px;background:#5f5f5f;"></div>
<div class="a" style="left:274px;top:601px;width:819px;height:2px;background:#5f5f5f;"></div>
<div class="a" style="left:274px;top:571px;width:146px;height:30px;background:transparent;border:1px solid #444;border-radius:4px;"></div>
<svg class="a" style="left:281.5px;top:578.5px;" width="15" height="15" viewBox="0 0 24 24"><path fill="#fff" d="M22 9.24l-7.19-.62L12 2 9.19 8.63 2 9.24l5.46 4.73L5.82 21 12 17.27 18.18 21l-1.63-7.03L22 9.24zM12 15.4l-3.76 2.27 1-4.28-3.32-2.88 4.38-.38L12 6.1l1.71 4.04 4.38.38-3.32 2.88 1 4.28L12 15.4z"/></svg>
<div class="a" style="left:303px;top:571px;width:30px;height:30px;background:rgba(33,150,243,0.15);border:1px solid rgba(120,170,220,0.25);"></div>
<svg class="a" style="left:310.5px;top:578.5px;" width="15" height="15" viewBox="0 0 24 24"><path fill="#90caf9" d="M14.06 9.02l.92.92-1.11 1.11 1.41 1.41 2.52-2.52-3.75-3.75-2.52 2.52 1.41 1.41 1.12-1.1zm6.65-1.98c.39-.39.39-1.02 0-1.41l-2.34-2.34c-.2-.2-.45-.29-.7-.29s-.51.1-.7.29l-1.83 1.83 3.75 3.75 1.82-1.83zM2.81 2.81 1.39 4.22l7.32 7.32L3 17.25V21h3.75l5.71-5.71 7.32 7.32 1.41-1.41L2.81 2.81zM5.92 19H5v-.92l5.13-5.13.92.92L5.92 19z"/></svg>
<div class="a" style="left:332px;top:571px;width:1px;height:30px;background:#444;"></div>
<svg class="a" style="left:339.5px;top:578.5px;" width="15" height="15" viewBox="0 0 24 24"><path fill="#fff" d="M21.99 4c0-1.1-.89-2-1.99-2H4c-1.1 0-2 .9-2 2v12c0 1.1.9 2 2 2h14l4 4-.01-18zM20 4v13.17L18.83 16H4V4h16zM6 12h12v2H6zm0-3h12v2H6zm0-3h12v2H6z"/></svg>
<div class="a" style="left:361px;top:571px;width:1px;height:30px;background:#444;"></div>
<svg class="a" style="left:368.5px;top:578.5px;" width="15" height="15" viewBox="0 0 24 24"><path fill="#fff" d="M12 6c3.79 0 7.17 2.13 8.82 5.5C19.17 14.87 15.79 17 12 17s-7.17-2.13-8.82-5.5C4.83 8.13 8.21 6 12 6m0-2C7 4 2.73 7.11 1 11.5 2.73 15.89 7 19 12 19s9.27-3.11 11-7.5C21.27 7.11 17 4 12 4zm0 5c1.38 0 2.5 1.12 2.5 2.5S13.38 14 12 14s-2.5-1.12-2.5-2.5S10.62 9 12 9m0-2c-2.48 0-4.5 2.02-4.5 4.5S9.52 16 12 16s4.5-2.02 4.5-4.5S14.48 7 12 7z"/></svg>
<div class="a" style="left:390px;top:571px;width:1px;height:30px;background:#444;"></div>
<svg class="a" style="left:397.5px;top:578.5px;" width="15" height="15" viewBox="0 0 24 24"><path fill="#fff" fill-rule="evenodd" d="M5.3 4.6 Q12 2.6 18.7 4.6 L18.7 6.1 L5.3 6.1 Z M6 7.2h12v11.1a2.2 2.2 0 0 1-2.2 2.2H8.2A2.2 2.2 0 0 1 6 18.3Z M8.8 9.1v8.9h6.4V9.1Z"/></svg>
<div class="a" style="left:432.5px;top:579.63px;font-size:14.5px;line-height:14.5px;color:#fff;font-weight:400;-webkit-text-stroke-width:0.25px;">selected flow temperature (<span style="color:#90caf9;text-decoration:underline;text-decoration-color:rgba(144,202,249,0.55);text-underline-offset:1.5px;text-decoration-thickness:1px">selflowtemp</span>)</div>
<div class="a" style="right:27px;top:579.63px;font-size:14.5px;line-height:14.5px;color:#fff;font-weight:400;text-align:right;-webkit-text-stroke-width:0.25px;">5</div>
<div class="a" style="left:274px;top:603px;width:819px;height:30px;background:#303030;"></div>
<div class="a" style="left:274px;top:601px;width:819px;height:2px;background:#5f5f5f;"></div>
<div class="a" style="left:274px;top:633px;width:819px;height:2px;background:#5f5f5f;"></div>
<div class="a" style="left:274px;top:603px;width:146px;height:30px;background:transparent;border:1px solid #444;border-radius:4px;"></div>
<div class="a" style="left:274px;top:603px;width:30px;height:30px;background:rgba(33,150,243,0.15);border:1px solid rgba(120,170,220,0.25);border-radius:4px 0 0 4px;"></div>
<svg class="a" style="left:281.5px;top:610.5px;" width="15" height="15" viewBox="0 0 24 24"><path fill="#90caf9" d="M12 17.27L18.18 21l-1.64-7.03L22 9.24l-7.19-.61L12 2 9.19 8.63 2 9.24l5.46 4.73L5.82 21z"/></svg>
<div class="a" style="left:303px;top:603px;width:30px;height:30px;background:rgba(33,150,243,0.15);border:1px solid rgba(120,170,220,0.25);border-left-color:rgba(120,170,220,0.12);"></div>
<svg class="a" style="left:310.5px;top:610.5px;" width="15" height="15" viewBox="0 0 24 24"><path fill="#90caf9" d="M14.06 9.02l.92.92-1.11 1.11 1.41 1.41 2.52-2.52-3.75-3.75-2.52 2.52 1.41 1.41 1.12-1.1zm6.65-1.98c.39-.39.39-1.02 0-1.41l-2.34-2.34c-.2-.2-.45-.29-.7-.29s-.51.1-.7.29l-1.83 1.83 3.75 3.75 1.82-1.83zM2.81 2.81 1.39 4.22l7.32 7.32L3 17.25V21h3.75l5.71-5.71 7.32 7.32 1.41-1.41L2.81 2.81zM5.92 19H5v-.92l5.13-5.13.92.92L5.92 19z"/></svg>
<div class="a" style="left:332px;top:603px;width:30px;height:30px;background:rgba(33,150,243,0.15);border:1px solid rgba(120,170,220,0.25);border-left-color:rgba(120,170,220,0.12);"></div>
<svg class="a" style="left:339.5px;top:610.5px;" width="15" height="15" viewBox="0 0 24 24"><g mask="url(#slashm)"><path fill="#90caf9" fill-rule="evenodd" d="M4 2.4h14.8a2 2 0 0 1 2 2v11.2a2 2 0 0 1-2 2H4a2 2 0 0 1-2-2V4.4a2 2 0 0 1 2-2z M4.4 4.8v10.4h14V4.8z"/><path fill="#90caf9" d="M6.2 6.6h10.4v2H6.2z M6.2 10.2h10.4v1.8H6.2z"/></g><path d="M2.6 2.3 L20.6 21.7" stroke="#90caf9" stroke-width="1.9" stroke-linecap="round"/></svg>
<div class="a" style="left:361px;top:603px;width:1px;height:30px;background:#444;"></div>
<svg class="a" style="left:368.5px;top:610.5px;" width="15" height="15" viewBox="0 0 24 24"><path fill="#fff" d="M12 6c3.79 0 7.17 2.13 8.82 5.5C19.17 14.87 15.79 17 12 17s-7.17-2.13-8.82-5.5C4.83 8.13 8.21 6 12 6m0-2C7 4 2.73 7.11 1 11.5 2.73 15.89 7 19 12 19s9.27-3.11 11-7.5C21.27 7.11 17 4 12 4zm0 5c1.38 0 2.5 1.12 2.5 2.5S13.38 14 12 14s-2.5-1.12-2.5-2.5S10.62 9 12 9m0-2c-2.48 0-4.5 2.02-4.5 4.5S9.52 16 12 16s4.5-2.02 4.5-4.5S14.48 7 12 7z"/></svg>
<div class="a" style="left:390px;top:603px;width:1px;height:30px;background:#444;"></div>
<svg class="a" style="left:397.5px;top:610.5px;" width="15" height="15" viewBox="0 0 24 24"><path fill="#fff" fill-rule="evenodd" d="M5.3 4.6 Q12 2.6 18.7 4.6 L18.7 6.1 L5.3 6.1 Z M6 7.2h12v11.1a2.2 2.2 0 0 1-2.2 2.2H8.2A2.2 2.2 0 0 1 6 18.3Z M8.8 9.1v8.9h6.4V9.1Z"/></svg>
<div class="a" style="left:432.5px;top:611.63px;font-size:14.5px;line-height:14.5px;color:#fff;font-weight:400;-webkit-text-stroke-width:0.25px;">burner selected max power (<span style="color:#90caf9;text-decoration:underline;text-decoration-color:rgba(144,202,249,0.55);text-underline-offset:1.5px;text-decoration-thickness:1px">selburnpow</span>)</div>
<div class="a" style="right:27px;top:611.63px;font-size:14.5px;line-height:14.5px;color:#fff;font-weight:400;text-align:right;-webkit-text-stroke-width:0.25px;">0</div>
<div class="a" style="left:274px;top:635px;width:819px;height:30px;background:#1e1e1e;"></div>
<div class="a" style="left:274px;top:633px;width:819px;height:2px;background:#5f5f5f;"></div>
<div class="a" style="left:274px;top:665px;width:819px;height:2px;background:#5f5f5f;"></div>
<div class="a" style="left:274px;top:635px;width:146px;height:30px;background:transparent;border:1px solid #444;border-radius:4px;"></div>
<svg class="a" style="left:281.5px;top:642.5px;" width="15" height="15" viewBox="0 0 24 24"><path fill="#fff" d="M22 9.24l-7.19-.62L12 2 9.19 8.63 2 9.24l5.46 4.73L5.82 21 12 17.27 18.18 21l-1.63-7.03L22 9.24zM12 15.4l-3.76 2.27 1-4.28-3.32-2.88 4.38-.38L12 6.1l1.71 4.04 4.38.38-3.32 2.88 1 4.28L12 15.4z"/></svg>
<div class="a" style="left:303px;top:635px;width:1px;height:30px;background:#444;"></div>
<svg class="a" style="left:310.5px;top:642.5px;" width="15" height="15" viewBox="0 0 24 24"><path fill="#6a6a6a" d="M14.06 9.02l.92.92L5.92 19H5v-.92l9.06-9.06M17.66 3c-.25 0-.51.1-.7.29l-1.83 1.83 3.75 3.75 1.83-1.83c.39-.39.39-1.02 0-1.41l-2.34-2.34c-.2-.2-.45-.29-.71-.29zm-3.6 3.19L3 17.25V21h3.75L17.81 9.94l-3.75-3.75z"/></svg>
<div class="a" style="left:332px;top:635px;width:1px;height:30px;background:#444;"></div>
<svg class="a" style="left:339.5px;top:642.5px;" width="15" height="15" viewBox="0 0 24 24"><path fill="#fff" d="M21.99 4c0-1.1-.89-2-1.99-2H4c-1.1 0-2 .9-2 2v12c0 1.1.9 2 2 2h14l4 4-.01-18zM20 4v13.17L18.83 16H4V4h16zM6 12h12v2H6zm0-3h12v2H6zm0-3h12v2H6z"/></svg>
<div class="a" style="left:361px;top:635px;width:1px;height:30px;background:#444;"></div>
<svg class="a" style="left:368.5px;top:642.5px;" width="15" height="15" viewBox="0 0 24 24"><path fill="#fff" d="M12 6c3.79 0 7.17 2.13 8.82 5.5C19.17 14.87 15.79 17 12 17s-7.17-2.13-8.82-5.5C4.83 8.13 8.21 6 12 6m0-2C7 4 2.73 7.11 1 11.5 2.73 15.89 7 19 12 19s9.27-3.11 11-7.5C21.27 7.11 17 4 12 4zm0 5c1.38 0 2.5 1.12 2.5 2.5S13.38 14 12 14s-2.5-1.12-2.5-2.5S10.62 9 12 9m0-2c-2.48 0-4.5 2.02-4.5 4.5S9.52 16 12 16s4.5-2.02 4.5-4.5S14.48 7 12 7z"/></svg>
<div class="a" style="left:390px;top:635px;width:1px;height:30px;background:#444;"></div>
<svg class="a" style="left:397.5px;top:642.5px;" width="15" height="15" viewBox="0 0 24 24"><path fill="#fff" fill-rule="evenodd" d="M5.3 4.6 Q12 2.6 18.7 4.6 L18.7 6.1 L5.3 6.1 Z M6 7.2h12v11.1a2.2 2.2 0 0 1-2.2 2.2H8.2A2.2 2.2 0 0 1 6 18.3Z M8.8 9.1v8.9h6.4V9.1Z"/></svg>
<div class="a" style="left:432.5px;top:643.63px;font-size:14.5px;line-height:14.5px;color:#fff;font-weight:400;-webkit-text-stroke-width:0.25px;">heating pump modulation (<span style="color:#90caf9;text-decoration:underline;text-decoration-color:rgba(144,202,249,0.55);text-underline-offset:1.5px;text-decoration-thickness:1px">heatingpumpmod</span>)</div>
<div class="a" style="right:27px;top:643.63px;font-size:14.5px;line-height:14.5px;color:#fff;font-weight:400;text-align:right;-webkit-text-stroke-width:0.25px;">0</div>
<div class="a" style="left:274px;top:667px;width:819px;height:30px;background:#303030;"></div>
<div class="a" style="left:274px;top:665px;width:819px;height:2px;background:#5f5f5f;"></div>
<div class="a" style="left:274px;top:697px;width:819px;height:2px;background:#5f5f5f;"></div>
<div class="a" style="left:274px;top:667px;width:146px;height:30px;background:transparent;border:1px solid #444;border-radius:4px;"></div>
<svg class="a" style="left:281.5px;top:674.5px;" width="15" height="15" viewBox="0 0 24 24"><path fill="#6a6a6a" d="M22 9.24l-7.19-.62L12 2 9.19 8.63 2 9.24l5.46 4.73L5.82 21 12 17.27 18.18 21l-1.63-7.03L22 9.24zM12 15.4l-3.76 2.27 1-4.28-3.32-2.88 4.38-.38L12 6.1l1.71 4.04 4.38.38-3.32 2.88 1 4.28L12 15.4z"/></svg>
<div class="a" style="left:303px;top:667px;width:1px;height:30px;background:#444;"></div>
<svg class="a" style="left:310.5px;top:674.5px;" width="15" height="15" viewBox="0 0 24 24"><path fill="#6a6a6a" d="M14.06 9.02l.92.92L5.92 19H5v-.92l9.06-9.06M17.66 3c-.25 0-.51.1-.7.29l-1.83 1.83 3.75 3.75 1.83-1.83c.39-.39.39-1.02 0-1.41l-2.34-2.34c-.2-.2-.45-.29-.71-.29zm-3.6 3.19L3 17.25V21h3.75L17.81 9.94l-3.75-3.75z"/></svg>
<div class="a" style="left:332px;top:667px;width:1px;height:30px;background:#444;"></div>
<svg class="a" style="left:339.5px;top:674.5px;" width="15" height="15" viewBox="0 0 24 24"><path fill="#fff" d="M21.99 4c0-1.1-.89-2-1.99-2H4c-1.1 0-2 .9-2 2v12c0 1.1.9 2 2 2h14l4 4-.01-18zM20 4v13.17L18.83 16H4V4h16zM6 12h12v2H6zm0-3h12v2H6zm0-3h12v2H6z"/></svg>
<div class="a" style="left:361px;top:667px;width:30px;height:30px;background:rgba(33,150,243,0.15);border:1px solid rgba(120,170,220,0.25);"></div>
<svg class="a" style="left:368.5px;top:674.5px;" width="15" height="15" viewBox="0 0 24 24"><path fill="#90caf9" d="M12 6c3.79 0 7.17 2.13 8.82 5.5-.59 1.22-1.42 2.27-2.41 3.12l1.41 1.41c1.39-1.23 2.49-2.77 3.18-4.53C21.27 7.11 17 4 12 4c-1.27 0-2.49.2-3.64.57l1.65 1.65C10.66 6.09 11.32 6 12 6zm-1.07 1.14L13 9.21c.57.25 1.03.71 1.28 1.28l2.07 2.07c.08-.34.14-.7.14-1.07C16.5 9.01 14.48 7 12 7c-.37 0-.72.05-1.07.14zM2.01 3.87l2.68 2.68C3.06 7.83 1.77 9.53 1 11.5 2.73 15.89 7 19 12 19c1.52 0 2.98-.29 4.32-.82l3.42 3.42 1.41-1.41L3.42 2.45 2.01 3.87zm7.5 7.5 2.61 2.61c-.04.01-.08.02-.12.02-1.38 0-2.5-1.12-2.5-2.5 0-.05.01-.08.01-.13zm-3.4-3.4 1.75 1.75c-.23.55-.36 1.15-.36 1.78 0 2.48 2.02 4.5 4.5 4.5.63 0 1.23-.13 1.77-.36l.98.98c-.88.24-1.8.38-2.75.38-3.79 0-7.17-2.13-8.82-5.5.7-1.43 1.72-2.61 2.93-3.53z"/></svg>
<div class="a" style="left:390px;top:667px;width:1px;height:30px;background:#444;"></div>
<svg class="a" style="left:397.5px;top:674.5px;" width="15" height="15" viewBox="0 0 24 24"><path fill="#fff" fill-rule="evenodd" d="M5.3 4.6 Q12 2.6 18.7 4.6 L18.7 6.1 L5.3 6.1 Z M6 7.2h12v11.1a2.2 2.2 0 0 1-2.2 2.2H8.2A2.2 2.2 0 0 1 6 18.3Z M8.8 9.1v8.9h6.4V9.1Z"/></svg>
<div class="a" style="left:432.5px;top:675.63px;font-size:14.5px;line-height:14.5px;color:#fff;font-weight:400;-webkit-text-stroke-width:0.25px;">heating pump 2 modulation (<span style="color:#90caf9;text-decoration:underline;text-decoration-color:rgba(144,202,249,0.55);text-underline-offset:1.5px;text-decoration-thickness:1px">heatingpump2mod</span>)</div>
<div class="a" style="left:274px;top:699px;width:819px;height:30px;background:#1e1e1e;"></div>
<div class="a" style="left:274px;top:697px;width:819px;height:2px;background:#5f5f5f;"></div>
<div class="a" style="left:274px;top:729px;width:819px;height:2px;background:#5f5f5f;"></div>
<div class="a" style="left:274px;top:699px;width:146px;height:30px;background:transparent;border:1px solid #444;border-radius:4px;"></div>
<svg class="a" style="left:281.5px;top:706.5px;" width="15" height="15" viewBox="0 0 24 24"><path fill="#fff" d="M22 9.24l-7.19-.62L12 2 9.19 8.63 2 9.24l5.46 4.73L5.82 21 12 17.27 18.18 21l-1.63-7.03L22 9.24zM12 15.4l-3.76 2.27 1-4.28-3.32-2.88 4.38-.38L12 6.1l1.71 4.04 4.38.38-3.32 2.88 1 4.28L12 15.4z"/></svg>
<div class="a" style="left:303px;top:699px;width:1px;height:30px;background:#444;"></div>
<svg class="a" style="left:310.5px;top:706.5px;" width="15" height="15" viewBox="0 0 24 24"><path fill="#6a6a6a" d="M14.06 9.02l.92.92L5.92 19H5v-.92l9.06-9.06M17.66 3c-.25 0-.51.1-.7.29l-1.83 1.83 3.75 3.75 1.83-1.83c.39-.39.39-1.02 0-1.41l-2.34-2.34c-.2-.2-.45-.29-.71-.29zm-3.6 3.19L3 17.25V21h3.75L17.81 9.94l-3.75-3.75z"/></svg>
<div class="a" style="left:332px;top:699px;width:1px;height:30px;background:#444;"></div>
<svg class="a" style="left:339.5px;top:706.5px;" width="15" height="15" viewBox="0 0 24 24"><path fill="#fff" d="M21.99 4c0-1.1-.89-2-1.99-2H4c-1.1 0-2 .9-2 2v12c0 1.1.9 2 2 2h14l4 4-.01-18zM20 4v13.17L18.83 16H4V4h16zM6 12h12v2H6zm0-3h12v2H6zm0-3h12v2H6z"/></svg>
<div class="a" style="left:361px;top:699px;width:1px;height:30px;background:#444;"></div>
<svg class="a" style="left:368.5px;top:706.5px;" width="15" height="15" viewBox="0 0 24 24"><path fill="#fff" d="M12 6c3.79 0 7.17 2.13 8.82 5.5C19.17 14.87 15.79 17 12 17s-7.17-2.13-8.82-5.5C4.83 8.13 8.21 6 12 6m0-2C7 4 2.73 7.11 1 11.5 2.73 15.89 7 19 12 19s9.27-3.11 11-7.5C21.27 7.11 17 4 12 4zm0 5c1.38 0 2.5 1.12 2.5 2.5S13.38 14 12 14s-2.5-1.12-2.5-2.5S10.62 9 12 9m0-2c-2.48 0-4.5 2.02-4.5 4.5S9.52 16 12 16s4.5-2.02 4.5-4.5S14.48 7 12 7z"/></svg>
<div class="a" style="left:390px;top:699px;width:1px;height:30px;background:#444;"></div>
<svg class="a" style="left:397.5px;top:706.5px;" width="15" height="15" viewBox="0 0 24 24"><path fill="#fff" fill-rule="evenodd" d="M5.3 4.6 Q12 2.6 18.7 4.6 L18.7 6.1 L5.3 6.1 Z M6 7.2h12v11.1a2.2 2.2 0 0 1-2.2 2.2H8.2A2.2 2.2 0 0 1 6 18.3Z M8.8 9.1v8.9h6.4V9.1Z"/></svg>
<div class="a" style="left:432.5px;top:707.63px;font-size:14.5px;line-height:14.5px;color:#fff;font-weight:400;-webkit-text-stroke-width:0.25px;">outside temperature (<span style="color:#90caf9;text-decoration:underline;text-decoration-color:rgba(144,202,249,0.55);text-underline-offset:1.5px;text-decoration-thickness:1px">outdoortemp</span>)</div>
<div class="a" style="left:274px;top:731px;width:819px;height:30px;background:#303030;"></div>
<div class="a" style="left:274px;top:729px;width:819px;height:2px;background:#5f5f5f;"></div>
<div class="a" style="left:274px;top:761px;width:819px;height:2px;background:#5f5f5f;"></div>
<div class="a" style="left:274px;top:731px;width:146px;height:30px;background:transparent;border:1px solid #444;border-radius:4px;"></div>
<svg class="a" style="left:281.5px;top:738.5px;" width="15" height="15" viewBox="0 0 24 24"><path fill="#fff" d="M22 9.24l-7.19-.62L12 2 9.19 8.63 2 9.24l5.46 4.73L5.82 21 12 17.27 18.18 21l-1.63-7.03L22 9.24zM12 15.4l-3.76 2.27 1-4.28-3.32-2.88 4.38-.38L12 6.1l1.71 4.04 4.38.38-3.32 2.88 1 4.28L12 15.4z"/></svg>
<div class="a" style="left:303px;top:731px;width:1px;height:30px;background:#444;"></div>
<svg class="a" style="left:310.5px;top:738.5px;" width="15" height="15" viewBox="0 0 24 24"><path fill="#6a6a6a" d="M14.06 9.02l.92.92L5.92 19H5v-.92l9.06-9.06M17.66 3c-.25 0-.51.1-.7.29l-1.83 1.83 3.75 3.75 1.83-1.83c.39-.39.39-1.02 0-1.41l-2.34-2.34c-.2-.2-.45-.29-.71-.29zm-3.6 3.19L3 17.25V21h3.75L17.81 9.94l-3.75-3.75z"/></svg>
<div class="a" style="left:332px;top:731px;width:1px;height:30px;background:#444;"></div>
<svg class="a" style="left:339.5px;top:738.5px;" width="15" height="15" viewBox="0 0 24 24"><path fill="#fff" d="M21.99 4c0-1.1-.89-2-1.99-2H4c-1.1 0-2 .9-2 2v12c0 1.1.9 2 2 2h14l4 4-.01-18zM20 4v13.17L18.83 16H4V4h16zM6 12h12v2H6zm0-3h12v2H6zm0-3h12v2H6z"/></svg>
<div class="a" style="left:361px;top:731px;width:1px;height:30px;background:#444;"></div>
<svg class="a" style="left:368.5px;top:738.5px;" width="15" height="15" viewBox="0 0 24 24"><path fill="#fff" d="M12 6c3.79 0 7.17 2.13 8.82 5.5C19.17 14.87 15.79 17 12 17s-7.17-2.13-8.82-5.5C4.83 8.13 8.21 6 12 6m0-2C7 4 2.73 7.11 1 11.5 2.73 15.89 7 19 12 19s9.27-3.11 11-7.5C21.27 7.11 17 4 12 4zm0 5c1.38 0 2.5 1.12 2.5 2.5S13.38 14 12 14s-2.5-1.12-2.5-2.5S10.62 9 12 9m0-2c-2.48 0-4.5 2.02-4.5 4.5S9.52 16 12 16s4.5-2.02 4.5-4.5S14.48 7 12 7z"/></svg>
<div class="a" style="left:390px;top:731px;width:1px;height:30px;background:#444;"></div>
<svg class="a" style="left:397.5px;top:738.5px;" width="15" height="15" viewBox="0 0 24 24"><path fill="#fff" fill-rule="evenodd" d="M5.3 4.6 Q12 2.6 18.7 4.6 L18.7 6.1 L5.3 6.1 Z M6 7.2h12v11.1a2.2 2.2 0 0 1-2.2 2.2H8.2A2.2 2.2 0 0 1 6 18.3Z M8.8 9.1v8.9h6.4V9.1Z"/></svg>
<div class="a" style="left:432.5px;top:739.63px;font-size:14.5px;line-height:14.5px;color:#fff;font-weight:400;-webkit-text-stroke-width:0.25px;">current flow temperature (<span style="color:#90caf9;text-decoration:underline;text-decoration-color:rgba(144,202,249,0.55);text-underline-offset:1.5px;text-decoration-thickness:1px">curflowtemp</span>)</div>
<div class="a" style="right:27px;top:739.63px;font-size:14.5px;line-height:14.5px;color:#fff;font-weight:400;text-align:right;-webkit-text-stroke-width:0.25px;">53</div>
<div class="a" style="left:274px;top:763px;width:819px;height:30px;background:#1e1e1e;"></div>
<div class="a" style="left:274px;top:761px;width:819px;height:2px;background:#5f5f5f;"></div>
<div class="a" style="left:274px;top:793px;width:819px;height:2px;background:#5f5f5f;"></div>
<div class="a" style="left:274px;top:763px;width:146px;height:30px;background:transparent;border:1px solid #444;border-radius:4px;"></div>
<svg class="a" style="left:281.5px;top:770.5px;" width="15" height="15" viewBox="0 0 24 24"><path fill="#fff" d="M22 9.24l-7.19-.62L12 2 9.19 8.63 2 9.24l5.46 4.73L5.82 21 12 17.27 18.18 21l-1.63-7.03L22 9.24zM12 15.4l-3.76 2.27 1-4.28-3.32-2.88 4.38-.38L12 6.1l1.71 4.04 4.38.38-3.32 2.88 1 4.28L12 15.4z"/></svg>
<div class="a" style="left:303px;top:763px;width:1px;height:30px;background:#444;"></div>
<svg class="a" style="left:310.5px;top:770.5px;" width="15" height="15" viewBox="0 0 24 24"><path fill="#6a6a6a" d="M14.06 9.02l.92.92L5.92 19H5v-.92l9.06-9.06M17.66 3c-.25 0-.51.1-.7.29l-1.83 1.83 3.75 3.75 1.83-1.83c.39-.39.39-1.02 0-1.41l-2.34-2.34c-.2-.2-.45-.29-.71-.29zm-3.6 3.19L3 17.25V21h3.75L17.81 9.94l-3.75-3.75z"/></svg>
<div class="a" style="left:332px;top:763px;width:1px;height:30px;background:#444;"></div>
<svg class="a" style="left:339.5px;top:770.5px;" width="15" height="15" viewBox="0 0 24 24"><path fill="#fff" d="M21.99 4c0-1.1-.89-2-1.99-2H4c-1.1 0-2 .9-2 2v12c0 1.1.9 2 2 2h14l4 4-.01-18zM20 4v13.17L18.83 16H4V4h16zM6 12h12v2H6zm0-3h12v2H6zm0-3h12v2H6z"/></svg>
<div class="a" style="left:361px;top:763px;width:1px;height:30px;background:#444;"></div>
<svg class="a" style="left:368.5px;top:770.5px;" width="15" height="15" viewBox="0 0 24 24"><path fill="#fff" d="M12 6c3.79 0 7.17 2.13 8.82 5.5C19.17 14.87 15.79 17 12 17s-7.17-2.13-8.82-5.5C4.83 8.13 8.21 6 12 6m0-2C7 4 2.73 7.11 1 11.5 2.73 15.89 7 19 12 19s9.27-3.11 11-7.5C21.27 7.11 17 4 12 4zm0 5c1.38 0 2.5 1.12 2.5 2.5S13.38 14 12 14s-2.5-1.12-2.5-2.5S10.62 9 12 9m0-2c-2.48 0-4.5 2.02-4.5 4.5S9.52 16 12 16s4.5-2.02 4.5-4.5S14.48 7 12 7z"/></svg>
<div class="a" style="left:390px;top:763px;width:1px;height:30px;background:#444;"></div>
<svg class="a" style="left:397.5px;top:770.5px;" width="15" height="15" viewBox="0 0 24 24"><path fill="#fff" fill-rule="evenodd" d="M5.3 4.6 Q12 2.6 18.7 4.6 L18.7 6.1 L5.3 6.1 Z M6 7.2h12v11.1a2.2 2.2 0 0 1-2.2 2.2H8.2A2.2 2.2 0 0 1 6 18.3Z M8.8 9.1v8.9h6.4V9.1Z"/></svg>
<div class="a" style="left:432.5px;top:771.63px;font-size:14.5px;line-height:14.5px;color:#fff;font-weight:400;-webkit-text-stroke-width:0.25px;">return temperature (<span style="color:#90caf9;text-decoration:underline;text-decoration-color:rgba(144,202,249,0.55);text-underline-offset:1.5px;text-decoration-thickness:1px">rettemp</span>)</div>
<div class="a" style="right:27px;top:771.63px;font-size:14.5px;line-height:14.5px;color:#fff;font-weight:400;text-align:right;-webkit-text-stroke-width:0.25px;">51,8</div>
<div class="a" style="left:274px;top:795px;width:819px;height:30px;background:#303030;"></div>
<div class="a" style="left:274px;top:793px;width:819px;height:2px;background:#5f5f5f;"></div>
<div class="a" style="left:274px;top:825px;width:819px;height:2px;background:#5f5f5f;"></div>
<div class="a" style="left:274px;top:795px;width:146px;height:30px;background:transparent;border:1px solid #444;border-radius:4px;"></div>
<svg class="a" style="left:281.5px;top:802.5px;" width="15" height="15" viewBox="0 0 24 24"><path fill="#fff" d="M22 9.24l-7.19-.62L12 2 9.19 8.63 2 9.24l5.46 4.73L5.82 21 12 17.27 18.18 21l-1.63-7.03L22 9.24zM12 15.4l-3.76 2.27 1-4.28-3.32-2.88 4.38-.38L12 6.1l1.71 4.04 4.38.38-3.32 2.88 1 4.28L12 15.4z"/></svg>
<div class="a" style="left:303px;top:795px;width:1px;height:30px;background:#444;"></div>
<svg class="a" style="left:310.5px;top:802.5px;" width="15" height="15" viewBox="0 0 24 24"><path fill="#6a6a6a" d="M14.06 9.02l.92.92L5.92 19H5v-.92l9.06-9.06M17.66 3c-.25 0-.51.1-.7.29l-1.83 1.83 3.75 3.75 1.83-1.83c.39-.39.39-1.02 0-1.41l-2.34-2.34c-.2-.2-.45-.29-.71-.29zm-3.6 3.19L3 17.25V21h3.75L17.81 9.94l-3.75-3.75z"/></svg>
<div class="a" style="left:332px;top:795px;width:1px;height:30px;background:#444;"></div>
<svg class="a" style="left:339.5px;top:802.5px;" width="15" height="15" viewBox="0 0 24 24"><path fill="#fff" d="M21.99 4c0-1.1-.89-2-1.99-2H4c-1.1 0-2 .9-2 2v12c0 1.1.9 2 2 2h14l4 4-.01-18zM20 4v13.17L18.83 16H4V4h16zM6 12h12v2H6zm0-3h12v2H6zm0-3h12v2H6z"/></svg>
<div class="a" style="left:361px;top:795px;width:1px;height:30px;background:#444;"></div>
<svg class="a" style="left:368.5px;top:802.5px;" width="15" height="15" viewBox="0 0 24 24"><path fill="#fff" d="M12 6c3.79 0 7.17 2.13 8.82 5.5C19.17 14.87 15.79 17 12 17s-7.17-2.13-8.82-5.5C4.83 8.13 8.21 6 12 6m0-2C7 4 2.73 7.11 1 11.5 2.73 15.89 7 19 12 19s9.27-3.11 11-7.5C21.27 7.11 17 4 12 4zm0 5c1.38 0 2.5 1.12 2.5 2.5S13.38 14 12 14s-2.5-1.12-2.5-2.5S10.62 9 12 9m0-2c-2.48 0-4.5 2.02-4.5 4.5S9.52 16 12 16s4.5-2.02 4.5-4.5S14.48 7 12 7z"/></svg>
<div class="a" style="left:390px;top:795px;width:1px;height:30px;background:#444;"></div>
<svg class="a" style="left:397.5px;top:802.5px;" width="15" height="15" viewBox="0 0 24 24"><path fill="#fff" fill-rule="evenodd" d="M5.3 4.6 Q12 2.6 18.7 4.6 L18.7 6.1 L5.3 6.1 Z M6 7.2h12v11.1a2.2 2.2 0 0 1-2.2 2.2H8.2A2.2 2.2 0 0 1 6 18.3Z M8.8 9.1v8.9h6.4V9.1Z"/></svg>
<div class="a" style="left:432.5px;top:803.63px;font-size:14.5px;line-height:14.5px;color:#fff;font-weight:400;-webkit-text-stroke-width:0.25px;">mixing switch temperature (<span style="color:#90caf9;text-decoration:underline;text-decoration-color:rgba(144,202,249,0.55);text-underline-offset:1.5px;text-decoration-thickness:1px">switchtemp</span>)</div>
<div class="a" style="left:274px;top:827px;width:819px;height:30px;background:#1e1e1e;"></div>
<div class="a" style="left:274px;top:825px;width:819px;height:2px;background:#5f5f5f;"></div>
<div class="a" style="left:274px;top:857px;width:819px;height:2px;background:#5f5f5f;"></div>
<div class="a" style="left:274px;top:827px;width:146px;height:30px;background:transparent;border:1px solid #444;border-radius:4px;"></div>
<svg class="a" style="left:281.5px;top:834.5px;" width="15" height="15" viewBox="0 0 24 24"><path fill="#fff" d="M22 9.24l-7.19-.62L12 2 9.19 8.63 2 9.24l5.46 4.73L5.82 21 12 17.27 18.18 21l-1.63-7.03L22 9.24zM12 15.4l-3.76 2.27 1-4.28-3.32-2.88 4.38-.38L12 6.1l1.71 4.04 4.38.38-3.32 2.88 1 4.28L12 15.4z"/></svg>
<div class="a" style="left:303px;top:827px;width:1px;height:30px;background:#444;"></div>
<svg class="a" style="left:310.5px;top:834.5px;" width="15" height="15" viewBox="0 0 24 24"><path fill="#6a6a6a" d="M14.06 9.02l.92.92L5.92 19H5v-.92l9.06-9.06M17.66 3c-.25 0-.51.1-.7.29l-1.83 1.83 3.75 3.75 1.83-1.83c.39-.39.39-1.02 0-1.41l-2.34-2.34c-.2-.2-.45-.29-.71-.29zm-3.6 3.19L3 17.25V21h3.75L17.81 9.94l-3.75-3.75z"/></svg>
<div class="a" style="left:332px;top:827px;width:1px;height:30px;background:#444;"></div>
<svg class="a" style="left:339.5px;top:834.5px;" width="15" height="15" viewBox="0 0 24 24"><path fill="#fff" d="M21.99 4c0-1.1-.89-2-1.99-2H4c-1.1 0-2 .9-2 2v12c0 1.1.9 2 2 2h14l4 4-.01-18zM20 4v13.17L18.83 16H4V4h16zM6 12h12v2H6zm0-3h12v2H6zm0-3h12v2H6z"/></svg>
<div class="a" style="left:361px;top:827px;width:1px;height:30px;background:#444;"></div>
<svg class="a" style="left:368.5px;top:834.5px;" width="15" height="15" viewBox="0 0 24 24"><path fill="#fff" d="M12 6c3.79 0 7.17 2.13 8.82 5.5C19.17 14.87 15.79 17 12 17s-7.17-2.13-8.82-5.5C4.83 8.13 8.21 6 12 6m0-2C7 4 2.73 7.11 1 11.5 2.73 15.89 7 19 12 19s9.27-3.11 11-7.5C21.27 7.11 17 4 12 4zm0 5c1.38 0 2.5 1.12 2.5 2.5S13.38 14 12 14s-2.5-1.12-2.5-2.5S10.62 9 12 9m0-2c-2.48 0-4.5 2.02-4.5 4.5S9.52 16 12 16s4.5-2.02 4.5-4.5S14.48 7 12 7z"/></svg>
<div class="a" style="left:390px;top:827px;width:1px;height:30px;background:#444;"></div>
<svg class="a" style="left:397.5px;top:834.5px;" width="15" height="15" viewBox="0 0 24 24"><path fill="#fff" fill-rule="evenodd" d="M5.3 4.6 Q12 2.6 18.7 4.6 L18.7 6.1 L5.3 6.1 Z M6 7.2h12v11.1a2.2 2.2 0 0 1-2.2 2.2H8.2A2.2 2.2 0 0 1 6 18.3Z M8.8 9.1v8.9h6.4V9.1Z"/></svg>
<div class="a" style="left:432.5px;top:835.63px;font-size:14.5px;line-height:14.5px;color:#fff;font-weight:400;-webkit-text-stroke-width:0.25px;">system pressure (<span style="color:#90caf9;text-decoration:underline;text-decoration-color:rgba(144,202,249,0.55);text-underline-offset:1.5px;text-decoration-thickness:1px">syspress</span>)</div>
<div class="a" style="right:27px;top:835.63px;font-size:14.5px;line-height:14.5px;color:#fff;font-weight:400;text-align:right;-webkit-text-stroke-width:0.25px;">1,3</div>
<div class="a" style="left:274px;top:859px;width:819px;height:30px;background:#303030;"></div>
<div class="a" style="left:274px;top:857px;width:819px;height:2px;background:#5f5f5f;"></div>
<div class="a" style="left:274px;top:889px;width:819px;height:2px;background:#5f5f5f;"></div>
<div class="a" style="left:274px;top:859px;width:146px;height:30px;background:transparent;border:1px solid #444;border-radius:4px;"></div>
<svg class="a" style="left:281.5px;top:866.5px;" width="15" height="15" viewBox="0 0 24 24"><path fill="#fff" d="M22 9.24l-7.19-.62L12 2 9.19 8.63 2 9.24l5.46 4.73L5.82 21 12 17.27 18.18 21l-1.63-7.03L22 9.24zM12 15.4l-3.76 2.27 1-4.28-3.32-2.88 4.38-.38L12 6.1l1.71 4.04 4.38.38-3.32 2.88 1 4.28L12 15.4z"/></svg>
<div class="a" style="left:303px;top:859px;width:1px;height:30px;background:#444;"></div>
<svg class="a" style="left:310.5px;top:866.5px;" width="15" height="15" viewBox="0 0 24 24"><path fill="#6a6a6a" d="M14.06 9.02l.92.92L5.92 19H5v-.92l9.06-9.06M17.66 3c-.25 0-.51.1-.7.29l-1.83 1.83 3.75 3.75 1.83-1.83c.39-.39.39-1.02 0-1.41l-2.34-2.34c-.2-.2-.45-.29-.71-.29zm-3.6 3.19L3 17.25V21h3.75L17.81 9.94l-3.75-3.75z"/></svg>
<div class="a" style="left:332px;top:859px;width:1px;height:30px;background:#444;"></div>
<svg class="a" style="left:339.5px;top:866.5px;" width="15" height="15" viewBox="0 0 24 24"><path fill="#fff" d="M21.99 4c0-1.1-.89-2-1.99-2H4c-1.1 0-2 .9-2 2v12c0 1.1.9 2 2 2h14l4 4-.01-18zM20 4v13.17L18.83 16H4V4h16zM6 12h12v2H6zm0-3h12v2H6zm0-3h12v2H6z"/></svg>
<div class="a" style="left:361px;top:859px;width:1px;height:30px;background:#444;"></div>
<svg class="a" style="left:368.5px;top:866.5px;" width="15" height="15" viewBox="0 0 24 24"><path fill="#fff" d="M12 6c3.79 0 7.17 2.13 8.82 5.5C19.17 14.87 15.79 17 12 17s-7.17-2.13-8.82-5.5C4.83 8.13 8.21 6 12 6m0-2C7 4 2.73 7.11 1 11.5 2.73 15.89 7 19 12 19s9.27-3.11 11-7.5C21.27 7.11 17 4 12 4zm0 5c1.38 0 2.5 1.12 2.5 2.5S13.38 14 12 14s-2.5-1.12-2.5-2.5S10.62 9 12 9m0-2c-2.48 0-4.5 2.02-4.5 4.5S9.52 16 12 16s4.5-2.02 4.5-4.5S14.48 7 12 7z"/></svg>
<div class="a" style="left:390px;top:859px;width:1px;height:30px;background:#444;"></div>
<svg class="a" style="left:397.5px;top:866.5px;" width="15" height="15" viewBox="0 0 24 24"><path fill="#fff" fill-rule="evenodd" d="M5.3 4.6 Q12 2.6 18.7 4.6 L18.7 6.1 L5.3 6.1 Z M6 7.2h12v11.1a2.2 2.2 0 0 1-2.2 2.2H8.2A2.2 2.2 0 0 1 6 18.3Z M8.8 9.1v8.9h6.4V9.1Z"/></svg>
<div class="a" style="left:432.5px;top:867.63px;font-size:14.5px;line-height:14.5px;color:#fff;font-weight:400;-webkit-text-stroke-width:0.25px;">actual boiler temperature (<span style="color:#90caf9;text-decoration:underline;text-decoration-color:rgba(144,202,249,0.55);text-underline-offset:1.5px;text-decoration-thickness:1px">boiltemp</span>)</div>
<div class="a" style="right:27px;top:867.63px;font-size:14.5px;line-height:14.5px;color:#fff;font-weight:400;text-align:right;-webkit-text-stroke-width:0.25px;">54,6</div>
<div class="a" style="left:274px;top:891px;width:819px;height:30px;background:#1e1e1e;"></div>
<div class="a" style="left:274px;top:889px;width:819px;height:2px;background:#5f5f5f;"></div>
<div class="a" style="left:274px;top:921px;width:819px;height:2px;background:#5f5f5f;"></div>
<div class="a" style="left:274px;top:891px;width:146px;height:30px;background:transparent;border:1px solid #444;border-radius:4px;"></div>
<svg class="a" style="left:281.5px;top:898.5px;" width="15" height="15" viewBox="0 0 24 24"><path fill="#fff" d="M22 9.24l-7.19-.62L12 2 9.19 8.63 2 9.24l5.46 4.73L5.82 21 12 17.27 18.18 21l-1.63-7.03L22 9.24zM12 15.4l-3.76 2.27 1-4.28-3.32-2.88 4.38-.38L12 6.1l1.71 4.04 4.38.38-3.32 2.88 1 4.28L12 15.4z"/></svg>
<div class="a" style="left:303px;top:891px;width:1px;height:30px;background:#444;"></div>
<svg class="a" style="left:310.5px;top:898.5px;" width="15" height="15" viewBox="0 0 24 24"><path fill="#6a6a6a" d="M14.06 9.02l.92.92L5.92 19H5v-.92l9.06-9.06M17.66 3c-.25 0-.51.1-.7.29l-1.83 1.83 3.75 3.75 1.83-1.83c.39-.39.39-1.02 0-1.41l-2.34-2.34c-.2-.2-.45-.29-.71-.29zm-3.6 3.19L3 17.25V21h3.75L17.81 9.94l-3.75-3.75z"/></svg>
<div class="a" style="left:332px;top:891px;width:1px;height:30px;background:#444;"></div>
<svg class="a" style="left:339.5px;top:898.5px;" width="15" height="15" viewBox="0 0 24 24"><path fill="#fff" d="M21.99 4c0-1.1-.89-2-1.99-2H4c-1.1 0-2 .9-2 2v12c0 1.1.9 2 2 2h14l4 4-.01-18zM20 4v13.17L18.83 16H4V4h16zM6 12h12v2H6zm0-3h12v2H6zm0-3h12v2H6z"/></svg>
<div class="a" style="left:361px;top:891px;width:1px;height:30px;background:#444;"></div>
<svg class="a" style="left:368.5px;top:898.5px;" width="15" height="15" viewBox="0 0 24 24"><path fill="#fff" d="M12 6c3.79 0 7.17 2.13 8.82 5.5C19.17 14.87 15.79 17 12 17s-7.17-2.13-8.82-5.5C4.83 8.13 8.21 6 12 6m0-2C7 4 2.73 7.11 1 11.5 2.73 15.89 7 19 12 19s9.27-3.11 11-7.5C21.27 7.11 17 4 12 4zm0 5c1.38 0 2.5 1.12 2.5 2.5S13.38 14 12 14s-2.5-1.12-2.5-2.5S10.62 9 12 9m0-2c-2.48 0-4.5 2.02-4.5 4.5S9.52 16 12 16s4.5-2.02 4.5-4.5S14.48 7 12 7z"/></svg>
<div class="a" style="left:390px;top:891px;width:1px;height:30px;background:#444;"></div>
<svg class="a" style="left:397.5px;top:898.5px;" width="15" height="15" viewBox="0 0 24 24"><path fill="#fff" fill-rule="evenodd" d="M5.3 4.6 Q12 2.6 18.7 4.6 L18.7 6.1 L5.3 6.1 Z M6 7.2h12v11.1a2.2 2.2 0 0 1-2.2 2.2H8.2A2.2 2.2 0 0 1 6 18.3Z M8.8 9.1v8.9h6.4V9.1Z"/></svg>
<div class="a" style="left:432.5px;top:899.63px;font-size:14.5px;line-height:14.5px;color:#fff;font-weight:400;-webkit-text-stroke-width:0.25px;">exhaust temperature (<span style="color:#90caf9;text-decoration:underline;text-decoration-color:rgba(144,202,249,0.55);text-underline-offset:1.5px;text-decoration-thickness:1px">exhausttemp</span>)</div>
<div class="a" style="left:274px;top:923px;width:819px;height:30px;background:#303030;"></div>
<div class="a" style="left:274px;top:921px;width:819px;height:2px;background:#5f5f5f;"></div>
<div class="a" style="left:274px;top:953px;width:819px;height:2px;background:#5f5f5f;"></div>
<div class="a" style="left:274px;top:923px;width:146px;height:30px;background:transparent;border:1px solid #444;border-radius:4px;"></div>
<svg class="a" style="left:281.5px;top:930.5px;" width="15" height="15" viewBox="0 0 24 24"><path fill="#fff" d="M22 9.24l-7.19-.62L12 2 9.19 8.63 2 9.24l5.46 4.73L5.82 21 12 17.27 18.18 21l-1.63-7.03L22 9.24zM12 15.4l-3.76 2.27 1-4.28-3.32-2.88 4.38-.38L12 6.1l1.71 4.04 4.38.38-3.32 2.88 1 4.28L12 15.4z"/></svg>
<div class="a" style="left:303px;top:923px;width:1px;height:30px;background:#444;"></div>
<svg class="a" style="left:310.5px;top:930.5px;" width="15" height="15" viewBox="0 0 24 24"><path fill="#6a6a6a" d="M14.06 9.02l.92.92L5.92 19H5v-.92l9.06-9.06M17.66 3c-.25 0-.51.1-.7.29l-1.83 1.83 3.75 3.75 1.83-1.83c.39-.39.39-1.02 0-1.41l-2.34-2.34c-.2-.2-.45-.29-.71-.29zm-3.6 3.19L3 17.25V21h3.75L17.81 9.94l-3.75-3.75z"/></svg>
<div class="a" style="left:332px;top:923px;width:1px;height:30px;background:#444;"></div>
<svg class="a" style="left:339.5px;top:930.5px;" width="15" height="15" viewBox="0 0 24 24"><path fill="#fff" d="M21.99 4c0-1.1-.89-2-1.99-2H4c-1.1 0-2 .9-2 2v12c0 1.1.9 2 2 2h14l4 4-.01-18zM20 4v13.17L18.83 16H4V4h16zM6 12h12v2H6zm0-3h12v2H6zm0-3h12v2H6z"/></svg>
<div class="a" style="left:361px;top:923px;width:1px;height:30px;background:#444;"></div>
<svg class="a" style="left:368.5px;top:930.5px;" width="15" height="15" viewBox="0 0 24 24"><path fill="#fff" d="M12 6c3.79 0 7.17 2.13 8.82 5.5C19.17 14.87 15.79 17 12 17s-7.17-2.13-8.82-5.5C4.83 8.13 8.21 6 12 6m0-2C7 4 2.73 7.11 1 11.5 2.73 15.89 7 19 12 19s9.27-3.11 11-7.5C21.27 7.11 17 4 12 4zm0 5c1.38 0 2.5 1.12 2.5 2.5S13.38 14 12 14s-2.5-1.12-2.5-2.5S10.62 9 12 9m0-2c-2.48 0-4.5 2.02-4.5 4.5S9.52 16 12 16s4.5-2.02 4.5-4.5S14.48 7 12 7z"/></svg>
<div class="a" style="left:390px;top:923px;width:1px;height:30px;background:#444;"></div>
<svg class="a" style="left:397.5px;top:930.5px;" width="15" height="15" viewBox="0 0 24 24"><path fill="#fff" fill-rule="evenodd" d="M5.3 4.6 Q12 2.6 18.7 4.6 L18.7 6.1 L5.3 6.1 Z M6 7.2h12v11.1a2.2 2.2 0 0 1-2.2 2.2H8.2A2.2 2.2 0 0 1 6 18.3Z M8.8 9.1v8.9h6.4V9.1Z"/></svg>
<div class="a" style="left:432.5px;top:931.63px;font-size:14.5px;line-height:14.5px;color:#fff;font-weight:400;-webkit-text-stroke-width:0.25px;">gas (<span style="color:#90caf9;text-decoration:underline;text-decoration-color:rgba(144,202,249,0.55);text-underline-offset:1.5px;text-decoration-thickness:1px">burngas</span>)</div>
<div class="a" style="right:27px;top:931.63px;font-size:14.5px;line-height:14.5px;color:#fff;font-weight:400;text-align:right;-webkit-text-stroke-width:0.25px;">false</div>
<div class="a" style="left:274px;top:955px;width:819px;height:30px;background:#1e1e1e;"></div>
<div class="a" style="left:274px;top:953px;width:819px;height:2px;background:#5f5f5f;"></div>
<div class="a" style="left:274px;top:985px;width:819px;height:2px;background:#5f5f5f;"></div>
<div class="a" style="left:274px;top:955px;width:146px;height:30px;background:transparent;border:1px solid #444;border-radius:4px;"></div>
<svg class="a" style="left:281.5px;top:962.5px;" width="15" height="15" viewBox="0 0 24 24"><path fill="#fff" d="M22 9.24l-7.19-.62L12 2 9.19 8.63 2 9.24l5.46 4.73L5.82 21 12 17.27 18.18 21l-1.63-7.03L22 9.24zM12 15.4l-3.76 2.27 1-4.28-3.32-2.88 4.38-.38L12 6.1l1.71 4.04 4.38.38-3.32 2.88 1 4.28L12 15.4z"/></svg>
<div class="a" style="left:303px;top:955px;width:1px;height:30px;background:#444;"></div>
<svg class="a" style="left:310.5px;top:962.5px;" width="15" height="15" viewBox="0 0 24 24"><path fill="#6a6a6a" d="M14.06 9.02l.92.92L5.92 19H5v-.92l9.06-9.06M17.66 3c-.25 0-.51.1-.7.29l-1.83 1.83 3.75 3.75 1.83-1.83c.39-.39.39-1.02 0-1.41l-2.34-2.34c-.2-.2-.45-.29-.71-.29zm-3.6 3.19L3 17.25V21h3.75L17.81 9.94l-3.75-3.75z"/></svg>
<div class="a" style="left:332px;top:955px;width:1px;height:30px;background:#444;"></div>
<svg class="a" style="left:339.5px;top:962.5px;" width="15" height="15" viewBox="0 0 24 24"><path fill="#fff" d="M21.99 4c0-1.1-.89-2-1.99-2H4c-1.1 0-2 .9-2 2v12c0 1.1.9 2 2 2h14l4 4-.01-18zM20 4v13.17L18.83 16H4V4h16zM6 12h12v2H6zm0-3h12v2H6zm0-3h12v2H6z"/></svg>
<div class="a" style="left:361px;top:955px;width:1px;height:30px;background:#444;"></div>
<svg class="a" style="left:368.5px;top:962.5px;" width="15" height="15" viewBox="0 0 24 24"><path fill="#fff" d="M12 6c3.79 0 7.17 2.13 8.82 5.5C19.17 14.87 15.79 17 12 17s-7.17-2.13-8.82-5.5C4.83 8.13 8.21 6 12 6m0-2C7 4 2.73 7.11 1 11.5 2.73 15.89 7 19 12 19s9.27-3.11 11-7.5C21.27 7.11 17 4 12 4zm0 5c1.38 0 2.5 1.12 2.5 2.5S13.38 14 12 14s-2.5-1.12-2.5-2.5S10.62 9 12 9m0-2c-2.48 0-4.5 2.02-4.5 4.5S9.52 16 12 16s4.5-2.02 4.5-4.5S14.48 7 12 7z"/></svg>
<div class="a" style="left:390px;top:955px;width:1px;height:30px;background:#444;"></div>
<svg class="a" style="left:397.5px;top:962.5px;" width="15" height="15" viewBox="0 0 24 24"><path fill="#fff" fill-rule="evenodd" d="M5.3 4.6 Q12 2.6 18.7 4.6 L18.7 6.1 L5.3 6.1 Z M6 7.2h12v11.1a2.2 2.2 0 0 1-2.2 2.2H8.2A2.2 2.2 0 0 1 6 18.3Z M8.8 9.1v8.9h6.4V9.1Z"/></svg>
<div class="a" style="left:432.5px;top:963.63px;font-size:14.5px;line-height:14.5px;color:#fff;font-weight:400;-webkit-text-stroke-width:0.25px;">gas stage 2 (<span style="color:#90caf9;text-decoration:underline;text-decoration-color:rgba(144,202,249,0.55);text-underline-offset:1.5px;text-decoration-thickness:1px">burngas2</span>)</div>
<div class="a" style="right:27px;top:963.63px;font-size:14.5px;line-height:14.5px;color:#fff;font-weight:400;text-align:right;-webkit-text-stroke-width:0.25px;">false</div>
<div class="a" style="left:274px;top:987px;width:819px;height:30px;background:#303030;"></div>
<div class="a" style="left:274px;top:985px;width:819px;height:2px;background:#5f5f5f;"></div>
<div class="a" style="left:274px;top:1017px;width:819px;height:2px;background:#5f5f5f;"></div>
<div class="a" style="left:274px;top:987px;width:146px;height:30px;background:transparent;border:1px solid #444;border-radius:4px;"></div>
<svg class="a" style="left:281.5px;top:994.5px;" width="15" height="15" viewBox="0 0 24 24"><path fill="#fff" d="M22 9.24l-7.19-.62L12 2 9.19 8.63 2 9.24l5.46 4.73L5.82 21 12 17.27 18.18 21l-1.63-7.03L22 9.24zM12 15.4l-3.76 2.27 1-4.28-3.32-2.88 4.38-.38L12 6.1l1.71 4.04 4.38.38-3.32 2.88 1 4.28L12 15.4z"/></svg>
<div class="a" style="left:303px;top:987px;width:1px;height:30px;background:#444;"></div>
<svg class="a" style="left:310.5px;top:994.5px;" width="15" height="15" viewBox="0 0 24 24"><path fill="#6a6a6a" d="M14.06 9.02l.92.92L5.92 19H5v-.92l9.06-9.06M17.66 3c-.25 0-.51.1-.7.29l-1.83 1.83 3.75 3.75 1.83-1.83c.39-.39.39-1.02 0-1.41l-2.34-2.34c-.2-.2-.45-.29-.71-.29zm-3.6 3.19L3 17.25V21h3.75L17.81 9.94l-3.75-3.75z"/></svg>
<div class="a" style="left:332px;top:987px;width:1px;height:30px;background:#444;"></div>
<svg class="a" style="left:339.5px;top:994.5px;" width="15" height="15" viewBox="0 0 24 24"><path fill="#fff" d="M21.99 4c0-1.1-.89-2-1.99-2H4c-1.1 0-2 .9-2 2v12c0 1.1.9 2 2 2h14l4 4-.01-18zM20 4v13.17L18.83 16H4V4h16zM6 12h12v2H6zm0-3h12v2H6zm0-3h12v2H6z"/></svg>
<div class="a" style="left:361px;top:987px;width:1px;height:30px;background:#444;"></div>
<svg class="a" style="left:368.5px;top:994.5px;" width="15" height="15" viewBox="0 0 24 24"><path fill="#fff" d="M12 6c3.79 0 7.17 2.13 8.82 5.5C19.17 14.87 15.79 17 12 17s-7.17-2.13-8.82-5.5C4.83 8.13 8.21 6 12 6m0-2C7 4 2.73 7.11 1 11.5 2.73 15.89 7 19 12 19s9.27-3.11 11-7.5C21.27 7.11 17 4 12 4zm0 5c1.38 0 2.5 1.12 2.5 2.5S13.38 14 12 14s-2.5-1.12-2.5-2.5S10.62 9 12 9m0-2c-2.48 0-4.5 2.02-4.5 4.5S9.52 16 12 16s4.5-2.02 4.5-4.5S14.48 7 12 7z"/></svg>
<div class="a" style="left:390px;top:987px;width:1px;height:30px;background:#444;"></div>
<svg class="a" style="left:397.5px;top:994.5px;" width="15" height="15" viewBox="0 0 24 24"><path fill="#fff" fill-rule="evenodd" d="M5.3 4.6 Q12 2.6 18.7 4.6 L18.7 6.1 L5.3 6.1 Z M6 7.2h12v11.1a2.2 2.2 0 0 1-2.2 2.2H8.2A2.2 2.2 0 0 1 6 18.3Z M8.8 9.1v8.9h6.4V9.1Z"/></svg>
<div class="a" style="left:432.5px;top:995.63px;font-size:14.5px;line-height:14.5px;color:#fff;font-weight:400;-webkit-text-stroke-width:0.25px;">flame current (<span style="color:#90caf9;text-decoration:underline;text-decoration-color:rgba(144,202,249,0.55);text-underline-offset:1.5px;text-decoration-thickness:1px">flamecurr</span>)</div>
<div class="a" style="right:27px;top:995.63px;font-size:14.5px;line-height:14.5px;color:#fff;font-weight:400;text-align:right;-webkit-text-stroke-width:0.25px;">0</div>
<div class="a" style="left:274px;top:1019px;width:819px;height:30px;background:#1e1e1e;"></div>
<div class="a" style="left:274px;top:1017px;width:819px;height:2px;background:#5f5f5f;"></div>
<div class="a" style="left:274px;top:1049px;width:819px;height:2px;background:#5f5f5f;"></div>
<div class="a" style="left:274px;top:1019px;width:146px;height:30px;background:transparent;border:1px solid #444;border-radius:4px;"></div>
<svg class="a" style="left:281.5px;top:1026.5px;" width="15" height="15" viewBox="0 0 24 24"><path fill="#fff" d="M22 9.24l-7.19-.62L12 2 9.19 8.63 2 9.24l5.46 4.73L5.82 21 12 17.27 18.18 21l-1.63-7.03L22 9.24zM12 15.4l-3.76 2.27 1-4.28-3.32-2.88 4.38-.38L12 6.1l1.71 4.04 4.38.38-3.32 2.88 1 4.28L12 15.4z"/></svg>
<div class="a" style="left:303px;top:1019px;width:1px;height:30px;background:#444;"></div>
<svg class="a" style="left:310.5px;top:1026.5px;" width="15" height="15" viewBox="0 0 24 24"><path fill="#6a6a6a" d="M14.06 9.02l.92.92L5.92 19H5v-.92l9.06-9.06M17.66 3c-.25 0-.51.1-.7.29l-1.83 1.83 3.75 3.75 1.83-1.83c.39-.39.39-1.02 0-1.41l-2.34-2.34c-.2-.2-.45-.29-.71-.29zm-3.6 3.19L3 17.25V21h3.75L17.81 9.94l-3.75-3.75z"/></svg>
<div class="a" style="left:332px;top:1019px;width:1px;height:30px;background:#444;"></div>
<svg class="a" style="left:339.5px;top:1026.5px;" width="15" height="15" viewBox="0 0 24 24"><path fill="#fff" d="M21.99 4c0-1.1-.89-2-1.99-2H4c-1.1 0-2 .9-2 2v12c0 1.1.9 2 2 2h14l4 4-.01-18zM20 4v13.17L18.83 16H4V4h16zM6 12h12v2H6zm0-3h12v2H6zm0-3h12v2H6z"/></svg>
<div class="a" style="left:361px;top:1019px;width:1px;height:30px;background:#444;"></div>
<svg class="a" style="left:368.5px;top:1026.5px;" width="15" height="15" viewBox="0 0 24 24"><path fill="#fff" d="M12 6c3.79 0 7.17 2.13 8.82 5.5C19.17 14.87 15.79 17 12 17s-7.17-2.13-8.82-5.5C4.83 8.13 8.21 6 12 6m0-2C7 4 2.73 7.11 1 11.5 2.73 15.89 7 19 12 19s9.27-3.11 11-7.5C21.27 7.11 17 4 12 4zm0 5c1.38 0 2.5 1.12 2.5 2.5S13.38 14 12 14s-2.5-1.12-2.5-2.5S10.62 9 12 9m0-2c-2.48 0-4.5 2.02-4.5 4.5S9.52 16 12 16s4.5-2.02 4.5-4.5S14.48 7 12 7z"/></svg>
<div class="a" style="left:390px;top:1019px;width:1px;height:30px;background:#444;"></div>
<svg class="a" style="left:397.5px;top:1026.5px;" width="15" height="15" viewBox="0 0 24 24"><path fill="#fff" fill-rule="evenodd" d="M5.3 4.6 Q12 2.6 18.7 4.6 L18.7 6.1 L5.3 6.1 Z M6 7.2h12v11.1a2.2 2.2 0 0 1-2.2 2.2H8.2A2.2 2.2 0 0 1 6 18.3Z M8.8 9.1v8.9h6.4V9.1Z"/></svg>
<div class="a" style="left:432.5px;top:1027.63px;font-size:14.5px;line-height:14.5px;color:#fff;font-weight:400;-webkit-text-stroke-width:0.25px;">heating pump (<span style="color:#90caf9;text-decoration:underline;text-decoration-color:rgba(144,202,249,0.55);text-underline-offset:1.5px;text-decoration-thickness:1px">heatingpump</span>)</div>
<div class="a" style="right:27px;top:1027.63px;font-size:14.5px;line-height:14.5px;color:#fff;font-weight:400;text-align:right;-webkit-text-stroke-width:0.25px;">false</div>
<div class="a" style="left:274px;top:1051px;width:819px;height:30px;background:#303030;"></div>
<div class="a" style="left:274px;top:1049px;width:819px;height:2px;background:#5f5f5f;"></div>
<div class="a" style="left:274px;top:1081px;width:819px;height:2px;background:#5f5f5f;"></div>
<div class="a" style="left:274px;top:1051px;width:146px;height:30px;background:transparent;border:1px solid #444;border-radius:4px;"></div>
<svg class="a" style="left:281.5px;top:1058.5px;" width="15" height="15" viewBox="0 0 24 24"><path fill="#fff" d="M22 9.24l-7.19-.62L12 2 9.19 8.63 2 9.24l5.46 4.73L5.82 21 12 17.27 18.18 21l-1.63-7.03L22 9.24zM12 15.4l-3.76 2.27 1-4.28-3.32-2.88 4.38-.38L12 6.1l1.71 4.04 4.38.38-3.32 2.88 1 4.28L12 15.4z"/></svg>
<div class="a" style="left:303px;top:1051px;width:1px;height:30px;background:#444;"></div>
<svg class="a" style="left:310.5px;top:1058.5px;" width="15" height="15" viewBox="0 0 24 24"><path fill="#6a6a6a" d="M14.06 9.02l.92.92L5.92 19H5v-.92l9.06-9.06M17.66 3c-.25 0-.51.1-.7.29l-1.83 1.83 3.75 3.75 1.83-1.83c.39-.39.39-1.02 0-1.41l-2.34-2.34c-.2-.2-.45-.29-.71-.29zm-3.6 3.19L3 17.25V21h3.75L17.81 9.94l-3.75-3.75z"/></svg>
<div class="a" style="left:332px;top:1051px;width:1px;height:30px;background:#444;"></div>
<svg class="a" style="left:339.5px;top:1058.5px;" width="15" height="15" viewBox="0 0 24 24"><path fill="#fff" d="M21.99 4c0-1.1-.89-2-1.99-2H4c-1.1 0-2 .9-2 2v12c0 1.1.9 2 2 2h14l4 4-.01-18zM20 4v13.17L18.83 16H4V4h16zM6 12h12v2H6zm0-3h12v2H6zm0-3h12v2H6z"/></svg>
<div class="a" style="left:361px;top:1051px;width:1px;height:30px;background:#444;"></div>
<svg class="a" style="left:368.5px;top:1058.5px;" width="15" height="15" viewBox="0 0 24 24"><path fill="#fff" d="M12 6c3.79 0 7.17 2.13 8.82 5.5C19.17 14.87 15.79 17 12 17s-7.17-2.13-8.82-5.5C4.83 8.13 8.21 6 12 6m0-2C7 4 2.73 7.11 1 11.5 2.73 15.89 7 19 12 19s9.27-3.11 11-7.5C21.27 7.11 17 4 12 4zm0 5c1.38 0 2.5 1.12 2.5 2.5S13.38 14 12 14s-2.5-1.12-2.5-2.5S10.62 9 12 9m0-2c-2.48 0-4.5 2.02-4.5 4.5S9.52 16 12 16s4.5-2.02 4.5-4.5S14.48 7 12 7z"/></svg>
<div class="a" style="left:390px;top:1051px;width:1px;height:30px;background:#444;"></div>
<svg class="a" style="left:397.5px;top:1058.5px;" width="15" height="15" viewBox="0 0 24 24"><path fill="#fff" fill-rule="evenodd" d="M5.3 4.6 Q12 2.6 18.7 4.6 L18.7 6.1 L5.3 6.1 Z M6 7.2h12v11.1a2.2 2.2 0 0 1-2.2 2.2H8.2A2.2 2.2 0 0 1 6 18.3Z M8.8 9.1v8.9h6.4V9.1Z"/></svg>
<div class="a" style="left:432.5px;top:1059.63px;font-size:14.5px;line-height:14.5px;color:#fff;font-weight:400;-webkit-text-stroke-width:0.25px;">fan (<span style="color:#90caf9;text-decoration:underline;text-decoration-color:rgba(144,202,249,0.55);text-underline-offset:1.5px;text-decoration-thickness:1px">fanwork</span>)</div>
<div class="a" style="right:27px;top:1059.63px;font-size:14.5px;line-height:14.5px;color:#fff;font-weight:400;text-align:right;-webkit-text-stroke-width:0.25px;">false</div>
<div class="a" style="left:274px;top:1083px;width:819px;height:30px;background:#1e1e1e;"></div>
<div class="a" style="left:274px;top:1081px;width:819px;height:2px;background:#5f5f5f;"></div>
<div class="a" style="left:274px;top:1113px;width:819px;height:2px;background:#5f5f5f;"></div>
<div class="a" style="left:274px;top:1083px;width:146px;height:30px;background:transparent;border:1px solid #444;border-radius:4px;"></div>
<svg class="a" style="left:281.5px;top:1090.5px;" width="15" height="15" viewBox="0 0 24 24"><path fill="#fff" d="M22 9.24l-7.19-.62L12 2 9.19 8.63 2 9.24l5.46 4.73L5.82 21 12 17.27 18.18 21l-1.63-7.03L22 9.24zM12 15.4l-3.76 2.27 1-4.28-3.32-2.88 4.38-.38L12 6.1l1.71 4.04 4.38.38-3.32 2.88 1 4.28L12 15.4z"/></svg>
<div class="a" style="left:303px;top:1083px;width:1px;height:30px;background:#444;"></div>
<svg class="a" style="left:310.5px;top:1090.5px;" width="15" height="15" viewBox="0 0 24 24"><path fill="#6a6a6a" d="M14.06 9.02l.92.92L5.92 19H5v-.92l9.06-9.06M17.66 3c-.25 0-.51.1-.7.29l-1.83 1.83 3.75 3.75 1.83-1.83c.39-.39.39-1.02 0-1.41l-2.34-2.34c-.2-.2-.45-.29-.71-.29zm-3.6 3.19L3 17.25V21h3.75L17.81 9.94l-3.75-3.75z"/></svg>
<div class="a" style="left:332px;top:1083px;width:1px;height:30px;background:#444;"></div>
<svg class="a" style="left:339.5px;top:1090.5px;" width="15" height="15" viewBox="0 0 24 24"><path fill="#fff" d="M21.99 4c0-1.1-.89-2-1.99-2H4c-1.1 0-2 .9-2 2v12c0 1.1.9 2 2 2h14l4 4-.01-18zM20 4v13.17L18.83 16H4V4h16zM6 12h12v2H6zm0-3h12v2H6zm0-3h12v2H6z"/></svg>
<div class="a" style="left:361px;top:1083px;width:1px;height:30px;background:#444;"></div>
<svg class="a" style="left:368.5px;top:1090.5px;" width="15" height="15" viewBox="0 0 24 24"><path fill="#fff" d="M12 6c3.79 0 7.17 2.13 8.82 5.5C19.17 14.87 15.79 17 12 17s-7.17-2.13-8.82-5.5C4.83 8.13 8.21 6 12 6m0-2C7 4 2.73 7.11 1 11.5 2.73 15.89 7 19 12 19s9.27-3.11 11-7.5C21.27 7.11 17 4 12 4zm0 5c1.38 0 2.5 1.12 2.5 2.5S13.38 14 12 14s-2.5-1.12-2.5-2.5S10.62 9 12 9m0-2c-2.48 0-4.5 2.02-4.5 4.5S9.52 16 12 16s4.5-2.02 4.5-4.5S14.48 7 12 7z"/></svg>
<div class="a" style="left:390px;top:1083px;width:1px;height:30px;background:#444;"></div>
<svg class="a" style="left:397.5px;top:1090.5px;" width="15" height="15" viewBox="0 0 24 24"><path fill="#fff" fill-rule="evenodd" d="M5.3 4.6 Q12 2.6 18.7 4.6 L18.7 6.1 L5.3 6.1 Z M6 7.2h12v11.1a2.2 2.2 0 0 1-2.2 2.2H8.2A2.2 2.2 0 0 1 6 18.3Z M8.8 9.1v8.9h6.4V9.1Z"/></svg>
<div class="a" style="left:432.5px;top:1091.63px;font-size:14.5px;line-height:14.5px;color:#fff;font-weight:400;-webkit-text-stroke-width:0.25px;">ignition (<span style="color:#90caf9;text-decoration:underline;text-decoration-color:rgba(144,202,249,0.55);text-underline-offset:1.5px;text-decoration-thickness:1px">ignwork</span>)</div>
<div class="a" style="right:27px;top:1091.63px;font-size:14.5px;line-height:14.5px;color:#fff;font-weight:400;text-align:right;-webkit-text-stroke-width:0.25px;">false</div>
<div class="a" style="left:274px;top:1115px;width:819px;height:30px;background:#303030;"></div>
<div class="a" style="left:274px;top:1113px;width:819px;height:2px;background:#5f5f5f;"></div>
<div class="a" style="left:274px;top:1145px;width:819px;height:2px;background:#5f5f5f;"></div>
<div class="a" style="left:274px;top:1115px;width:146px;height:30px;background:transparent;border:1px solid #444;border-radius:4px;"></div>
<svg class="a" style="left:281.5px;top:1122.5px;" width="15" height="15" viewBox="0 0 24 24"><path fill="#fff" d="M22 9.24l-7.19-.62L12 2 9.19 8.63 2 9.24l5.46 4.73L5.82 21 12 17.27 18.18 21l-1.63-7.03L22 9.24zM12 15.4l-3.76 2.27 1-4.28-3.32-2.88 4.38-.38L12 6.1l1.71 4.04 4.38.38-3.32 2.88 1 4.28L12 15.4z"/></svg>
<div class="a" style="left:303px;top:1115px;width:1px;height:30px;background:#444;"></div>
<svg class="a" style="left:310.5px;top:1122.5px;" width="15" height="15" viewBox="0 0 24 24"><path fill="#6a6a6a" d="M14.06 9.02l.92.92L5.92 19H5v-.92l9.06-9.06M17.66 3c-.25 0-.51.1-.7.29l-1.83 1.83 3.75 3.75 1.83-1.83c.39-.39.39-1.02 0-1.41l-2.34-2.34c-.2-.2-.45-.29-.71-.29zm-3.6 3.19L3 17.25V21h3.75L17.81 9.94l-3.75-3.75z"/></svg>
<div class="a" style="left:332px;top:1115px;width:1px;height:30px;background:#444;"></div>
<svg class="a" style="left:339.5px;top:1122.5px;" width="15" height="15" viewBox="0 0 24 24"><path fill="#fff" d="M21.99 4c0-1.1-.89-2-1.99-2H4c-1.1 0-2 .9-2 2v12c0 1.1.9 2 2 2h14l4 4-.01-18zM20 4v13.17L18.83 16H4V4h16zM6 12h12v2H6zm0-3h12v2H6zm0-3h12v2H6z"/></svg>
<div class="a" style="left:361px;top:1115px;width:1px;height:30px;background:#444;"></div>
<svg class="a" style="left:368.5px;top:1122.5px;" width="15" height="15" viewBox="0 0 24 24"><path fill="#fff" d="M12 6c3.79 0 7.17 2.13 8.82 5.5C19.17 14.87 15.79 17 12 17s-7.17-2.13-8.82-5.5C4.83 8.13 8.21 6 12 6m0-2C7 4 2.73 7.11 1 11.5 2.73 15.89 7 19 12 19s9.27-3.11 11-7.5C21.27 7.11 17 4 12 4zm0 5c1.38 0 2.5 1.12 2.5 2.5S13.38 14 12 14s-2.5-1.12-2.5-2.5S10.62 9 12 9m0-2c-2.48 0-4.5 2.02-4.5 4.5S9.52 16 12 16s4.5-2.02 4.5-4.5S14.48 7 12 7z"/></svg>
<div class="a" style="left:390px;top:1115px;width:1px;height:30px;background:#444;"></div>
<svg class="a" style="left:397.5px;top:1122.5px;" width="15" height="15" viewBox="0 0 24 24"><path fill="#fff" fill-rule="evenodd" d="M5.3 4.6 Q12 2.6 18.7 4.6 L18.7 6.1 L5.3 6.1 Z M6 7.2h12v11.1a2.2 2.2 0 0 1-2.2 2.2H8.2A2.2 2.2 0 0 1 6 18.3Z M8.8 9.1v8.9h6.4V9.1Z"/></svg>
<div class="a" style="left:432.5px;top:1123.63px;font-size:14.5px;line-height:14.5px;color:#fff;font-weight:400;-webkit-text-stroke-width:0.25px;">oil preheating (<span style="color:#90caf9;text-decoration:underline;text-decoration-color:rgba(144,202,249,0.55);text-underline-offset:1.5px;text-decoration-thickness:1px">oilpreheat</span>)</div>
<div class="a" style="right:27px;top:1123.63px;font-size:14.5px;line-height:14.5px;color:#fff;font-weight:400;text-align:right;-webkit-text-stroke-width:0.25px;">false</div>
<div class="a" style="left:274px;top:1147px;width:819px;height:30px;background:#1e1e1e;"></div>
<div class="a" style="left:274px;top:1145px;width:819px;height:2px;background:#5f5f5f;"></div>
<div class="a" style="left:274px;top:1177px;width:819px;height:2px;background:#5f5f5f;"></div>
<div class="a" style="left:274px;top:1147px;width:146px;height:30px;background:transparent;border:1px solid #444;border-radius:4px;"></div>
<svg class="a" style="left:281.5px;top:1154.5px;" width="15" height="15" viewBox="0 0 24 24"><path fill="#fff" d="M22 9.24l-7.19-.62L12 2 9.19 8.63 2 9.24l5.46 4.73L5.82 21 12 17.27 18.18 21l-1.63-7.03L22 9.24zM12 15.4l-3.76 2.27 1-4.28-3.32-2.88 4.38-.38L12 6.1l1.71 4.04 4.38.38-3.32 2.88 1 4.28L12 15.4z"/></svg>
<div class="a" style="left:303px;top:1147px;width:1px;height:30px;background:#444;"></div>
<svg class="a" style="left:310.5px;top:1154.5px;" width="15" height="15" viewBox="0 0 24 24"><path fill="#6a6a6a" d="M14.06 9.02l.92.92L5.92 19H5v-.92l9.06-9.06M17.66 3c-.25 0-.51.1-.7.29l-1.83 1.83 3.75 3.75 1.83-1.83c.39-.39.39-1.02 0-1.41l-2.34-2.34c-.2-.2-.45-.29-.71-.29zm-3.6 3.19L3 17.25V21h3.75L17.81 9.94l-3.75-3.75z"/></svg>
<div class="a" style="left:332px;top:1147px;width:1px;height:30px;background:#444;"></div>
<svg class="a" style="left:339.5px;top:1154.5px;" width="15" height="15" viewBox="0 0 24 24"><path fill="#fff" d="M21.99 4c0-1.1-.89-2-1.99-2H4c-1.1 0-2 .9-2 2v12c0 1.1.9 2 2 2h14l4 4-.01-18zM20 4v13.17L18.83 16H4V4h16zM6 12h12v2H6zm0-3h12v2H6zm0-3h12v2H6z"/></svg>
<div class="a" style="left:361px;top:1147px;width:1px;height:30px;background:#444;"></div>
<svg class="a" style="left:368.5px;top:1154.5px;" width="15" height="15" viewBox="0 0 24 24"><path fill="#fff" d="M12 6c3.79 0 7.17 2.13 8.82 5.5C19.17 14.87 15.79 17 12 17s-7.17-2.13-8.82-5.5C4.83 8.13 8.21 6 12 6m0-2C7 4 2.73 7.11 1 11.5 2.73 15.89 7 19 12 19s9.27-3.11 11-7.5C21.27 7.11 17 4 12 4zm0 5c1.38 0 2.5 1.12 2.5 2.5S13.38 14 12 14s-2.5-1.12-2.5-2.5S10.62 9 12 9m0-2c-2.48 0-4.5 2.02-4.5 4.5S9.52 16 12 16s4.5-2.02 4.5-4.5S14.48 7 12 7z"/></svg>
<div class="a" style="left:390px;top:1147px;width:1px;height:30px;background:#444;"></div>
<svg class="a" style="left:397.5px;top:1154.5px;" width="15" height="15" viewBox="0 0 24 24"><path fill="#fff" fill-rule="evenodd" d="M5.3 4.6 Q12 2.6 18.7 4.6 L18.7 6.1 L5.3 6.1 Z M6 7.2h12v11.1a2.2 2.2 0 0 1-2.2 2.2H8.2A2.2 2.2 0 0 1 6 18.3Z M8.8 9.1v8.9h6.4V9.1Z"/></svg>
<div class="a" style="left:432.5px;top:1155.63px;font-size:14.5px;line-height:14.5px;color:#fff;font-weight:400;-webkit-text-stroke-width:0.25px;">heating activated (<span style="color:#90caf9;text-decoration:underline;text-decoration-color:rgba(144,202,249,0.55);text-underline-offset:1.5px;text-decoration-thickness:1px">heatingactivated</span>)</div>
<div class="a" style="right:27px;top:1155.63px;font-size:14.5px;line-height:14.5px;color:#fff;font-weight:400;text-align:right;-webkit-text-stroke-width:0.25px;">true</div>
<div class="a" style="left:274px;top:1179px;width:819px;height:30px;background:#303030;"></div>
<div class="a" style="left:274px;top:1177px;width:819px;height:2px;background:#5f5f5f;"></div>
<div class="a" style="left:274px;top:1209px;width:819px;height:2px;background:#5f5f5f;"></div>
<div class="a" style="left:274px;top:1179px;width:146px;height:30px;background:transparent;border:1px solid #444;border-radius:4px;"></div>
<svg class="a" style="left:281.5px;top:1186.5px;" width="15" height="15" viewBox="0 0 24 24"><path fill="#fff" d="M22 9.24l-7.19-.62L12 2 9.19 8.63 2 9.24l5.46 4.73L5.82 21 12 17.27 18.18 21l-1.63-7.03L22 9.24zM12 15.4l-3.76 2.27 1-4.28-3.32-2.88 4.38-.38L12 6.1l1.71 4.04 4.38.38-3.32 2.88 1 4.28L12 15.4z"/></svg>
<div class="a" style="left:303px;top:1179px;width:1px;height:30px;background:#444;"></div>
<svg class="a" style="left:310.5px;top:1186.5px;" width="15" height="15" viewBox="0 0 24 24"><path fill="#6a6a6a" d="M14.06 9.02l.92.92L5.92 19H5v-.92l9.06-9.06M17.66 3c-.25 0-.51.1-.7.29l-1.83 1.83 3.75 3.75 1.83-1.83c.39-.39.39-1.02 0-1.41l-2.34-2.34c-.2-.2-.45-.29-.71-.29zm-3.6 3.19L3 17.25V21h3.75L17.81 9.94l-3.75-3.75z"/></svg>
<div class="a" style="left:332px;top:1179px;width:1px;height:30px;background:#444;"></div>
<svg class="a" style="left:339.5px;top:1186.5px;" width="15" height="15" viewBox="0 0 24 24"><path fill="#fff" d="M21.99 4c0-1.1-.89-2-1.99-2H4c-1.1 0-2 .9-2 2v12c0 1.1.9 2 2 2h14l4 4-.01-18zM20 4v13.17L18.83 16H4V4h16zM6 12h12v2H6zm0-3h12v2H6zm0-3h12v2H6z"/></svg>
<div class="a" style="left:361px;top:1179px;width:1px;height:30px;background:#444;"></div>
<svg class="a" style="left:368.5px;top:1186.5px;" width="15" height="15" viewBox="0 0 24 24"><path fill="#fff" d="M12 6c3.79 0 7.17 2.13 8.82 5.5C19.17 14.87 15.79 17 12 17s-7.17-2.13-8.82-5.5C4.83 8.13 8.21 6 12 6m0-2C7 4 2.73 7.11 1 11.5 2.73 15.89 7 19 12 19s9.27-3.11 11-7.5C21.27 7.11 17 4 12 4zm0 5c1.38 0 2.5 1.12 2.5 2.5S13.38 14 12 14s-2.5-1.12-2.5-2.5S10.62 9 12 9m0-2c-2.48 0-4.5 2.02-4.5 4.5S9.52 16 12 16s4.5-2.02 4.5-4.5S14.48 7 12 7z"/></svg>
<div class="a" style="left:390px;top:1179px;width:1px;height:30px;background:#444;"></div>
<svg class="a" style="left:397.5px;top:1186.5px;" width="15" height="15" viewBox="0 0 24 24"><path fill="#fff" fill-rule="evenodd" d="M5.3 4.6 Q12 2.6 18.7 4.6 L18.7 6.1 L5.3 6.1 Z M6 7.2h12v11.1a2.2 2.2 0 0 1-2.2 2.2H8.2A2.2 2.2 0 0 1 6 18.3Z M8.8 9.1v8.9h6.4V9.1Z"/></svg>
</body></html>
